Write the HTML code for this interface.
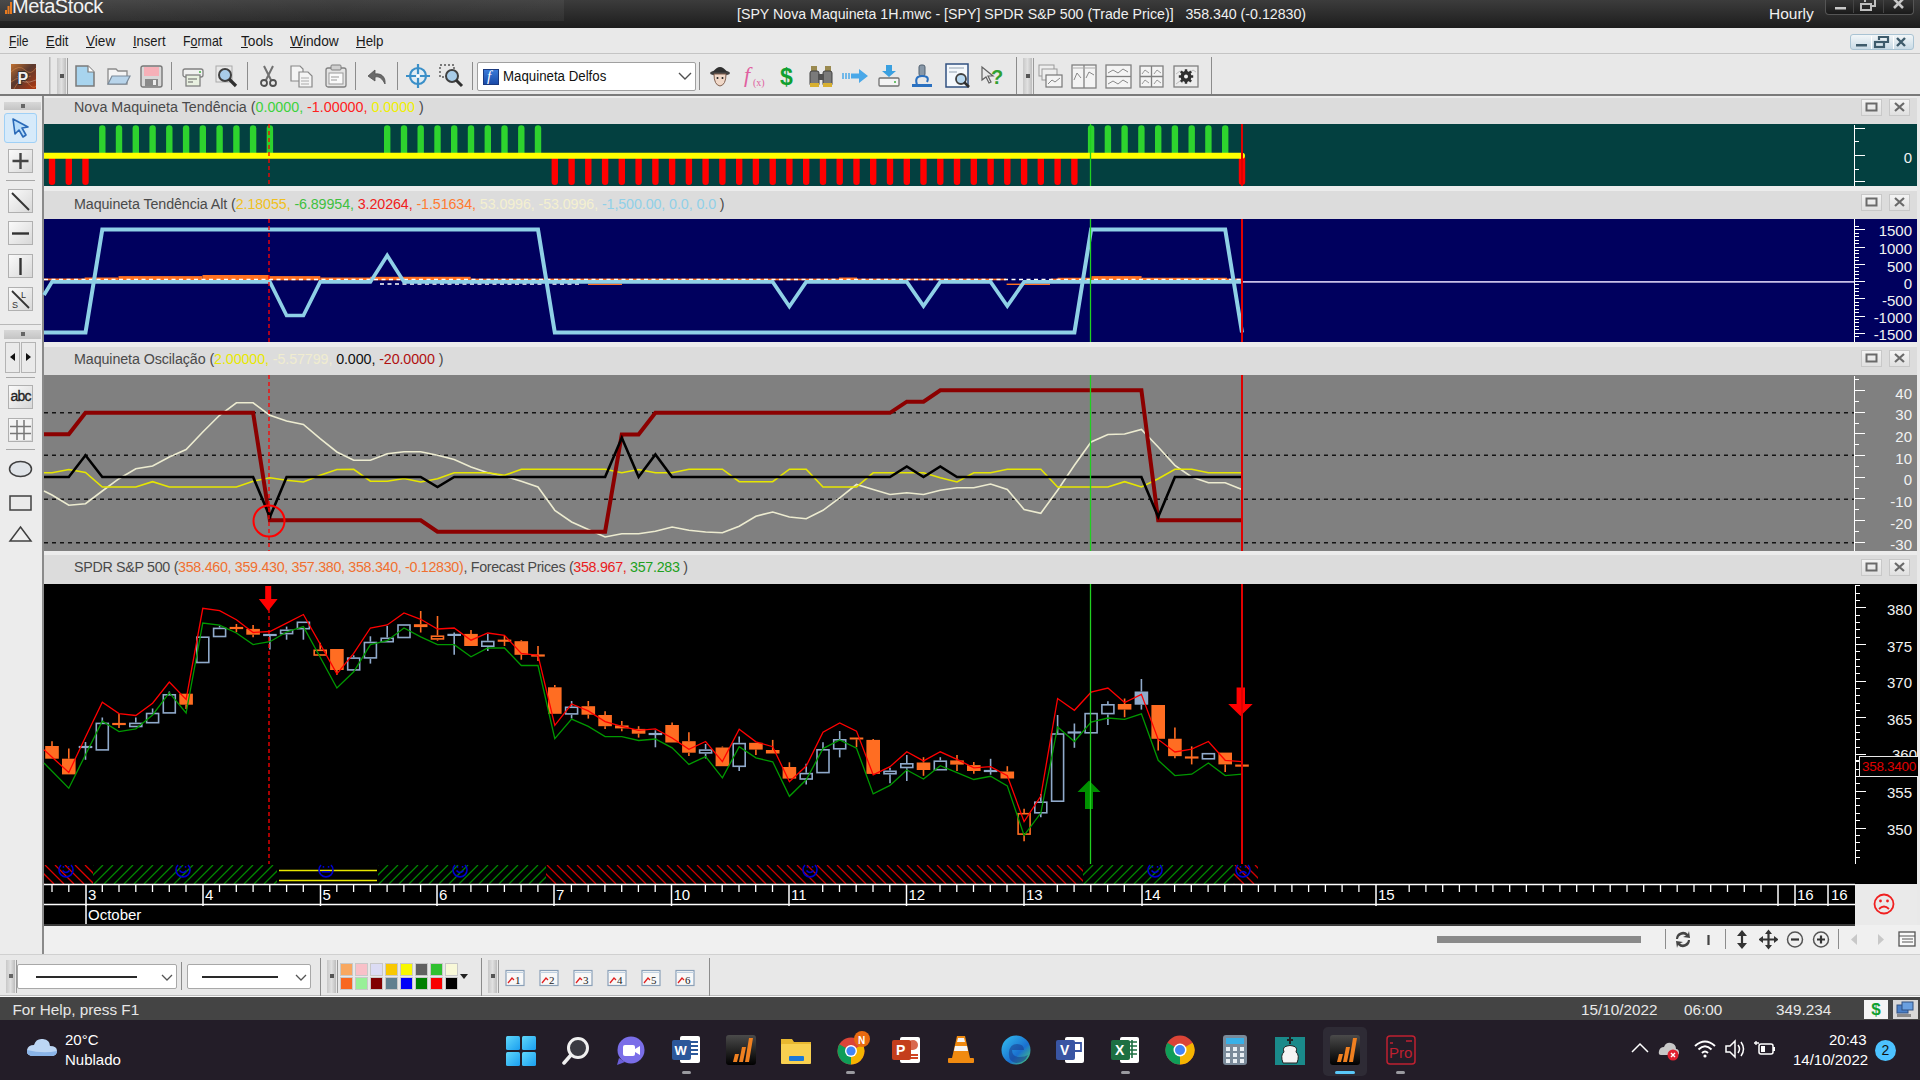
<!DOCTYPE html>
<html><head><meta charset="utf-8">
<style>
*{margin:0;padding:0;box-sizing:border-box}
html,body{width:1920px;height:1080px;overflow:hidden;background:#e9e9e9;font-family:"Liberation Sans",sans-serif}
.a{position:absolute}
.charts{position:absolute;left:0;top:0;z-index:2}
.top{z-index:3}
#title{left:0;top:0;width:1920px;height:28px;background:linear-gradient(#3c3c3c,#1d1d1d)}
#menu{left:0;top:28px;width:1920px;height:26px;background:#e9e9e9;border-bottom:1px solid #c4c4c4}
#menu span{position:absolute;top:4px;font-size:15px;color:#1a1a1a;transform-origin:0 0}
#tb{left:0;top:55px;width:1920px;height:41px;background:#e8e8e8;border-bottom:2px solid #7a7a7a}
#lt{left:0;top:96px;width:44px;height:858px;background:#ececec;border-right:2px solid #8a8a8a}
.hdr{left:44px;width:1873px;height:29px;background:#dcdcdc;border-top:4px solid #ececec}
.ht{left:74px;font-size:15.2px;color:#4a4a4a;white-space:pre;transform:scaleX(0.94);transform-origin:0 0;z-index:1}
.hb{position:absolute;width:21px;height:17px;border:1px solid #c8c8c8;background:linear-gradient(#f4f4f4,#e0e0e0)}
.xl{position:absolute;top:885.5px;font-size:15px;color:#fff;z-index:3}
.yl{position:absolute;font-size:15px;color:#f2f2f2;text-align:right;width:57px;left:1855px;z-index:3}
#status{left:0;top:996px;width:1920px;height:24px;background:#444444;color:#e6e6e6;font-size:15.3px;border-top:1px solid #fafafa}
#task{left:0;top:1020px;width:1920px;height:60px;background:#231d28}
</style></head><body>
<div class="a" id="title">
 <div class="a" style="left:0;top:0;width:564px;height:21px;background:linear-gradient(100deg,rgba(255,255,255,0.07),rgba(255,255,255,0.03) 60%,rgba(255,255,255,0.05))"></div>
 <div class="a" style="left:12px;top:-5px;font-size:20px;color:#f2f2f2;letter-spacing:-0.4px">MetaStock</div>
 <svg class="a" style="left:5px;top:2px" width="7" height="12"><path d="M0,12 V8 H2 V12 Z M2.5,12 V4 H4.5 V12 Z M5,12 V0 H7 V12 Z" fill="#e87a20"/></svg>
 <div class="a" style="left:737px;top:5.5px;font-size:14.2px;color:#f0f0f0;white-space:pre">[SPY Nova Maquineta 1H.mwc - [SPY] SPDR S&amp;P 500 (Trade Price)]   358.340 (-0.12830)</div>
 <div class="a" style="left:1769px;top:5px;font-size:15.5px;color:#f0f0f0">Hourly</div>
</div>
<div class="a" id="menu">
 <span style="left:9.25px;transform:scaleX(0.806)"><u>F</u>ile</span><span style="left:46.25px;transform:scaleX(0.869)"><u>E</u>dit</span><span style="left:85.75px;transform:scaleX(0.906)"><u>V</u>iew</span><span style="left:132.5px;transform:scaleX(0.867)"><u>I</u>nsert</span><span style="left:183.25px;transform:scaleX(0.826)">F<u>o</u>rmat</span><span style="left:240.5px;transform:scaleX(0.914)"><u>T</u>ools</span><span style="left:290px;transform:scaleX(0.913)"><u>W</u>indow</span><span style="left:356.25px;transform:scaleX(0.890)"><u>H</u>elp</span>
</div>
<div class="a" id="tb"></div>
<div class="a" id="lt"></div>

<!-- panels -->
<div class="a" style="left:44px;top:96px;width:1873px;height:2px;background:#ececec"></div>
<div class="a" style="left:44px;top:98px;width:1873px;height:26px;background:#dcdcdc"></div>
<div class="a ht" style="top:98px">Nova Maquineta Tendência (<span style="color:#3bd23b">0.0000, </span><span style="color:#ff2020">-1.00000, </span><span style="color:#f0f000">0.0000 </span>)</div>
<div class="a" style="left:44px;top:124px;width:1873px;height:62px;background:#034040"></div>
<div class="a" style="left:44px;top:186px;width:1873px;height:5px;background:#ececec"></div>
<div class="a" style="left:44px;top:191px;width:1873px;height:28px;background:#dcdcdc"></div>
<div class="a ht" style="top:194.5px;letter-spacing:-0.1px">Maquineta Tendência Alt (<span style="color:#f0c020">2.18055, </span><span style="color:#40c040">-6.89954, </span><span style="color:#f02020">3.20264, </span><span style="color:#ff7a30">-1.51634, </span><span style="color:#f4f0d0">53.0996, </span><span style="color:#f4f0d0">-53.0996, </span><span style="color:#90d0e8">-1,500.00, 0.0, 0.0</span> )</div>
<div class="a" style="left:44px;top:219px;width:1873px;height:123px;background:#00005e"></div>
<div class="a" style="left:44px;top:342px;width:1873px;height:5px;background:#ececec"></div>
<div class="a" style="left:44px;top:347px;width:1873px;height:28px;background:#dcdcdc"></div>
<div class="a ht" style="top:350px;letter-spacing:-0.1px">Maquineta Oscilação (<span style="color:#e8e800">2.00000, </span><span style="color:#f0ecd0">-5.57799, </span><span style="color:#101010">0.000, </span><span style="color:#b01010">-20.0000 </span>)</div>
<div class="a" style="left:44px;top:375px;width:1873px;height:176px;background:#808080"></div>
<div class="a" style="left:44px;top:551px;width:1873px;height:4px;background:#ececec"></div>
<div class="a" style="left:44px;top:555px;width:1873px;height:29px;background:#dcdcdc"></div>
<div class="a ht" style="top:558px;letter-spacing:-0.33px">SPDR S&amp;P 500 (<span style="color:#f07030">358.460, 359.430, 357.380, 358.340, -0.12830)</span>, Forecast Prices (<span style="color:#e82020">358.967, </span><span style="color:#20a020">357.283 </span>)</div>
<div class="a" style="left:44px;top:584px;width:1873px;height:341px;background:#000"></div>
<div class="a" id="status"><div class="a" style="left:12.5px;top:4px">For Help, press F1</div></div>
<div class="a" id="task"></div>
<svg class="charts" width="1920" height="1080"><line x1="52.0" y1="158" x2="52.0" y2="181.8" stroke="#ff0000" stroke-width="6.4" stroke-linecap="round"/>
<line x1="68.8" y1="158" x2="68.8" y2="181.8" stroke="#ff0000" stroke-width="6.4" stroke-linecap="round"/>
<line x1="85.5" y1="158" x2="85.5" y2="181.8" stroke="#ff0000" stroke-width="6.4" stroke-linecap="round"/>
<line x1="102.3" y1="128.5" x2="102.3" y2="153" stroke="#2ed32e" stroke-width="6.4" stroke-linecap="round"/>
<line x1="119.0" y1="128.5" x2="119.0" y2="153" stroke="#2ed32e" stroke-width="6.4" stroke-linecap="round"/>
<line x1="135.8" y1="128.5" x2="135.8" y2="153" stroke="#2ed32e" stroke-width="6.4" stroke-linecap="round"/>
<line x1="152.6" y1="128.5" x2="152.6" y2="153" stroke="#2ed32e" stroke-width="6.4" stroke-linecap="round"/>
<line x1="169.3" y1="128.5" x2="169.3" y2="153" stroke="#2ed32e" stroke-width="6.4" stroke-linecap="round"/>
<line x1="186.1" y1="128.5" x2="186.1" y2="153" stroke="#2ed32e" stroke-width="6.4" stroke-linecap="round"/>
<line x1="202.8" y1="128.5" x2="202.8" y2="153" stroke="#2ed32e" stroke-width="6.4" stroke-linecap="round"/>
<line x1="219.6" y1="128.5" x2="219.6" y2="153" stroke="#2ed32e" stroke-width="6.4" stroke-linecap="round"/>
<line x1="236.4" y1="128.5" x2="236.4" y2="153" stroke="#2ed32e" stroke-width="6.4" stroke-linecap="round"/>
<line x1="253.1" y1="128.5" x2="253.1" y2="153" stroke="#2ed32e" stroke-width="6.4" stroke-linecap="round"/>
<line x1="269.9" y1="128.5" x2="269.9" y2="153" stroke="#2ed32e" stroke-width="6.4" stroke-linecap="round"/>
<line x1="387.2" y1="128.5" x2="387.2" y2="153" stroke="#2ed32e" stroke-width="6.4" stroke-linecap="round"/>
<line x1="404.0" y1="128.5" x2="404.0" y2="153" stroke="#2ed32e" stroke-width="6.4" stroke-linecap="round"/>
<line x1="420.7" y1="128.5" x2="420.7" y2="153" stroke="#2ed32e" stroke-width="6.4" stroke-linecap="round"/>
<line x1="437.5" y1="128.5" x2="437.5" y2="153" stroke="#2ed32e" stroke-width="6.4" stroke-linecap="round"/>
<line x1="454.2" y1="128.5" x2="454.2" y2="153" stroke="#2ed32e" stroke-width="6.4" stroke-linecap="round"/>
<line x1="471.0" y1="128.5" x2="471.0" y2="153" stroke="#2ed32e" stroke-width="6.4" stroke-linecap="round"/>
<line x1="487.8" y1="128.5" x2="487.8" y2="153" stroke="#2ed32e" stroke-width="6.4" stroke-linecap="round"/>
<line x1="504.5" y1="128.5" x2="504.5" y2="153" stroke="#2ed32e" stroke-width="6.4" stroke-linecap="round"/>
<line x1="521.3" y1="128.5" x2="521.3" y2="153" stroke="#2ed32e" stroke-width="6.4" stroke-linecap="round"/>
<line x1="538.0" y1="128.5" x2="538.0" y2="153" stroke="#2ed32e" stroke-width="6.4" stroke-linecap="round"/>
<line x1="554.8" y1="158" x2="554.8" y2="181.8" stroke="#ff0000" stroke-width="6.4" stroke-linecap="round"/>
<line x1="571.6" y1="158" x2="571.6" y2="181.8" stroke="#ff0000" stroke-width="6.4" stroke-linecap="round"/>
<line x1="588.3" y1="158" x2="588.3" y2="181.8" stroke="#ff0000" stroke-width="6.4" stroke-linecap="round"/>
<line x1="605.1" y1="158" x2="605.1" y2="181.8" stroke="#ff0000" stroke-width="6.4" stroke-linecap="round"/>
<line x1="621.8" y1="158" x2="621.8" y2="181.8" stroke="#ff0000" stroke-width="6.4" stroke-linecap="round"/>
<line x1="638.6" y1="158" x2="638.6" y2="181.8" stroke="#ff0000" stroke-width="6.4" stroke-linecap="round"/>
<line x1="655.4" y1="158" x2="655.4" y2="181.8" stroke="#ff0000" stroke-width="6.4" stroke-linecap="round"/>
<line x1="672.1" y1="158" x2="672.1" y2="181.8" stroke="#ff0000" stroke-width="6.4" stroke-linecap="round"/>
<line x1="688.9" y1="158" x2="688.9" y2="181.8" stroke="#ff0000" stroke-width="6.4" stroke-linecap="round"/>
<line x1="705.6" y1="158" x2="705.6" y2="181.8" stroke="#ff0000" stroke-width="6.4" stroke-linecap="round"/>
<line x1="722.4" y1="158" x2="722.4" y2="181.8" stroke="#ff0000" stroke-width="6.4" stroke-linecap="round"/>
<line x1="739.2" y1="158" x2="739.2" y2="181.8" stroke="#ff0000" stroke-width="6.4" stroke-linecap="round"/>
<line x1="755.9" y1="158" x2="755.9" y2="181.8" stroke="#ff0000" stroke-width="6.4" stroke-linecap="round"/>
<line x1="772.7" y1="158" x2="772.7" y2="181.8" stroke="#ff0000" stroke-width="6.4" stroke-linecap="round"/>
<line x1="789.4" y1="158" x2="789.4" y2="181.8" stroke="#ff0000" stroke-width="6.4" stroke-linecap="round"/>
<line x1="806.2" y1="158" x2="806.2" y2="181.8" stroke="#ff0000" stroke-width="6.4" stroke-linecap="round"/>
<line x1="823.0" y1="158" x2="823.0" y2="181.8" stroke="#ff0000" stroke-width="6.4" stroke-linecap="round"/>
<line x1="839.7" y1="158" x2="839.7" y2="181.8" stroke="#ff0000" stroke-width="6.4" stroke-linecap="round"/>
<line x1="856.5" y1="158" x2="856.5" y2="181.8" stroke="#ff0000" stroke-width="6.4" stroke-linecap="round"/>
<line x1="873.2" y1="158" x2="873.2" y2="181.8" stroke="#ff0000" stroke-width="6.4" stroke-linecap="round"/>
<line x1="890.0" y1="158" x2="890.0" y2="181.8" stroke="#ff0000" stroke-width="6.4" stroke-linecap="round"/>
<line x1="906.8" y1="158" x2="906.8" y2="181.8" stroke="#ff0000" stroke-width="6.4" stroke-linecap="round"/>
<line x1="923.5" y1="158" x2="923.5" y2="181.8" stroke="#ff0000" stroke-width="6.4" stroke-linecap="round"/>
<line x1="940.3" y1="158" x2="940.3" y2="181.8" stroke="#ff0000" stroke-width="6.4" stroke-linecap="round"/>
<line x1="957.0" y1="158" x2="957.0" y2="181.8" stroke="#ff0000" stroke-width="6.4" stroke-linecap="round"/>
<line x1="973.8" y1="158" x2="973.8" y2="181.8" stroke="#ff0000" stroke-width="6.4" stroke-linecap="round"/>
<line x1="990.6" y1="158" x2="990.6" y2="181.8" stroke="#ff0000" stroke-width="6.4" stroke-linecap="round"/>
<line x1="1007.3" y1="158" x2="1007.3" y2="181.8" stroke="#ff0000" stroke-width="6.4" stroke-linecap="round"/>
<line x1="1024.1" y1="158" x2="1024.1" y2="181.8" stroke="#ff0000" stroke-width="6.4" stroke-linecap="round"/>
<line x1="1040.8" y1="158" x2="1040.8" y2="181.8" stroke="#ff0000" stroke-width="6.4" stroke-linecap="round"/>
<line x1="1057.6" y1="158" x2="1057.6" y2="181.8" stroke="#ff0000" stroke-width="6.4" stroke-linecap="round"/>
<line x1="1074.4" y1="158" x2="1074.4" y2="181.8" stroke="#ff0000" stroke-width="6.4" stroke-linecap="round"/>
<line x1="1091.1" y1="128.5" x2="1091.1" y2="153" stroke="#2ed32e" stroke-width="6.4" stroke-linecap="round"/>
<line x1="1107.9" y1="128.5" x2="1107.9" y2="153" stroke="#2ed32e" stroke-width="6.4" stroke-linecap="round"/>
<line x1="1124.6" y1="128.5" x2="1124.6" y2="153" stroke="#2ed32e" stroke-width="6.4" stroke-linecap="round"/>
<line x1="1141.4" y1="128.5" x2="1141.4" y2="153" stroke="#2ed32e" stroke-width="6.4" stroke-linecap="round"/>
<line x1="1158.2" y1="128.5" x2="1158.2" y2="153" stroke="#2ed32e" stroke-width="6.4" stroke-linecap="round"/>
<line x1="1174.9" y1="128.5" x2="1174.9" y2="153" stroke="#2ed32e" stroke-width="6.4" stroke-linecap="round"/>
<line x1="1191.7" y1="128.5" x2="1191.7" y2="153" stroke="#2ed32e" stroke-width="6.4" stroke-linecap="round"/>
<line x1="1208.4" y1="128.5" x2="1208.4" y2="153" stroke="#2ed32e" stroke-width="6.4" stroke-linecap="round"/>
<line x1="1225.2" y1="128.5" x2="1225.2" y2="153" stroke="#2ed32e" stroke-width="6.4" stroke-linecap="round"/>
<line x1="1242.0" y1="158" x2="1242.0" y2="181.8" stroke="#ff0000" stroke-width="6.4" stroke-linecap="round"/>
<line x1="44" y1="155.8" x2="1242.0" y2="155.8" stroke="#ffff00" stroke-width="6"/><circle cx="1242.0" cy="155.8" r="3" fill="#ffff00"/>
<line x1="1854.5" y1="125" x2="1854.5" y2="186" stroke="#fff" stroke-width="1"/>
<line x1="1855" y1="128.5" x2="1865" y2="128.5" stroke="#fff" stroke-width="1"/>
<line x1="1855" y1="141.5" x2="1859" y2="141.5" stroke="#fff" stroke-width="1"/>
<line x1="1855" y1="155.5" x2="1865" y2="155.5" stroke="#fff" stroke-width="1"/>
<line x1="1855" y1="169.5" x2="1859" y2="169.5" stroke="#fff" stroke-width="1"/>
<line x1="1855" y1="181.5" x2="1865" y2="181.5" stroke="#fff" stroke-width="1"/>
<line x1="1242" y1="281.8" x2="1855" y2="281.8" stroke="#c8c0e8" stroke-width="1.8"/>
<rect x="44" y="278.5" width="40.6" height="1.8" fill="#ff7020"/>
<rect x="84.6" y="277.5" width="33.9" height="2.8" fill="#ff7020"/>
<rect x="118.5" y="276.1" width="84.0" height="4.2" fill="#ff7020"/>
<rect x="202.5" y="275" width="66.5" height="5.3" fill="#ff7020"/>
<rect x="269" y="276.1" width="51.3" height="4.2" fill="#ff7020"/>
<rect x="320.3" y="277.5" width="49.7" height="2.8" fill="#ff7020"/>
<rect x="370" y="276.8" width="100.7" height="3.5" fill="#ff7020"/>
<rect x="470.7" y="278.6" width="368.3" height="1.7" fill="#ff7020"/>
<rect x="839" y="277.5" width="18.0" height="2.8" fill="#ff7020"/>
<rect x="857" y="278.6" width="149.0" height="1.7" fill="#ff7020"/>
<rect x="1051" y="278.6" width="6.6" height="1.7" fill="#ff7020"/>
<rect x="1057.6" y="277.75" width="33.9" height="2.6" fill="#ff7020"/>
<rect x="1091.5" y="276.1" width="50.1" height="4.2" fill="#ff7020"/>
<rect x="1141.6" y="277.75" width="85.4" height="2.6" fill="#ff7020"/>
<rect x="1227" y="278.6" width="15.0" height="1.7" fill="#ff7020"/>
<rect x="588" y="283.6" width="34.0" height="1.4" fill="#ff7020"/>
<rect x="1006.6" y="283.6" width="43.4" height="1.4" fill="#ff7020"/>
<line x1="44" y1="279.5" x2="1242" y2="279.5" stroke="#ffffff" stroke-width="1.4" stroke-dasharray="4 3.5"/>
<line x1="380" y1="284" x2="579" y2="284" stroke="#ffffff" stroke-width="1.4" stroke-dasharray="4 3.5"/>
<polyline points="44.0,295.0 52.0,281.9 269.9,281.9 286.6,315.5 303.4,315.5 320.2,281.9 370.4,281.9 387.2,255.5 404.0,281.9 772.7,281.9 789.4,306.5 806.2,281.9 906.8,281.9 923.5,306.0 940.3,281.9 990.6,281.9 1007.3,306.0 1024.1,281.9 1242.0,281.9" fill="none" stroke="#8fd0e6" stroke-width="3.7" stroke-linejoin="miter" />
<polyline points="44.0,332.5 85.5,332.5 102.3,229.5 538.0,229.5 554.8,332.5 1074.4,332.5 1091.1,229.5 1225.2,229.5 1242.0,332.5" fill="none" stroke="#8fd0e6" stroke-width="4" stroke-linejoin="miter" />
<line x1="1854.5" y1="219" x2="1854.5" y2="342" stroke="#fff" stroke-width="1"/>
<line x1="1855" y1="336.5" x2="1859" y2="336.5" stroke="#fff" stroke-width="1"/>
<line x1="1855" y1="333.5" x2="1865" y2="333.5" stroke="#fff" stroke-width="1"/>
<line x1="1855" y1="329.5" x2="1859" y2="329.5" stroke="#fff" stroke-width="1"/>
<line x1="1855" y1="326.5" x2="1859" y2="326.5" stroke="#fff" stroke-width="1"/>
<line x1="1855" y1="322.5" x2="1859" y2="322.5" stroke="#fff" stroke-width="1"/>
<line x1="1855" y1="319.5" x2="1859" y2="319.5" stroke="#fff" stroke-width="1"/>
<line x1="1855" y1="316.5" x2="1865" y2="316.5" stroke="#fff" stroke-width="1"/>
<line x1="1855" y1="312.5" x2="1859" y2="312.5" stroke="#fff" stroke-width="1"/>
<line x1="1855" y1="309.5" x2="1859" y2="309.5" stroke="#fff" stroke-width="1"/>
<line x1="1855" y1="305.5" x2="1859" y2="305.5" stroke="#fff" stroke-width="1"/>
<line x1="1855" y1="302.5" x2="1859" y2="302.5" stroke="#fff" stroke-width="1"/>
<line x1="1855" y1="298.5" x2="1865" y2="298.5" stroke="#fff" stroke-width="1"/>
<line x1="1855" y1="295.5" x2="1859" y2="295.5" stroke="#fff" stroke-width="1"/>
<line x1="1855" y1="291.5" x2="1859" y2="291.5" stroke="#fff" stroke-width="1"/>
<line x1="1855" y1="288.5" x2="1859" y2="288.5" stroke="#fff" stroke-width="1"/>
<line x1="1855" y1="284.5" x2="1859" y2="284.5" stroke="#fff" stroke-width="1"/>
<line x1="1855" y1="281.5" x2="1865" y2="281.5" stroke="#fff" stroke-width="1"/>
<line x1="1855" y1="278.5" x2="1859" y2="278.5" stroke="#fff" stroke-width="1"/>
<line x1="1855" y1="274.5" x2="1859" y2="274.5" stroke="#fff" stroke-width="1"/>
<line x1="1855" y1="271.5" x2="1859" y2="271.5" stroke="#fff" stroke-width="1"/>
<line x1="1855" y1="267.5" x2="1859" y2="267.5" stroke="#fff" stroke-width="1"/>
<line x1="1855" y1="264.5" x2="1865" y2="264.5" stroke="#fff" stroke-width="1"/>
<line x1="1855" y1="260.5" x2="1859" y2="260.5" stroke="#fff" stroke-width="1"/>
<line x1="1855" y1="257.5" x2="1859" y2="257.5" stroke="#fff" stroke-width="1"/>
<line x1="1855" y1="253.5" x2="1859" y2="253.5" stroke="#fff" stroke-width="1"/>
<line x1="1855" y1="250.5" x2="1859" y2="250.5" stroke="#fff" stroke-width="1"/>
<line x1="1855" y1="247.5" x2="1865" y2="247.5" stroke="#fff" stroke-width="1"/>
<line x1="1855" y1="243.5" x2="1859" y2="243.5" stroke="#fff" stroke-width="1"/>
<line x1="1855" y1="240.5" x2="1859" y2="240.5" stroke="#fff" stroke-width="1"/>
<line x1="1855" y1="236.5" x2="1859" y2="236.5" stroke="#fff" stroke-width="1"/>
<line x1="1855" y1="233.5" x2="1859" y2="233.5" stroke="#fff" stroke-width="1"/>
<line x1="1855" y1="229.5" x2="1865" y2="229.5" stroke="#fff" stroke-width="1"/>
<line x1="1855" y1="226.5" x2="1859" y2="226.5" stroke="#fff" stroke-width="1"/>
<line x1="44" y1="412.8" x2="1854" y2="412.8" stroke="#000" stroke-width="1.5" stroke-dasharray="4 4" opacity="0.85"/>
<line x1="44" y1="455.3" x2="1854" y2="455.3" stroke="#000" stroke-width="1.5" stroke-dasharray="4 4" opacity="0.85"/>
<line x1="44" y1="499.2" x2="1854" y2="499.2" stroke="#000" stroke-width="1.5" stroke-dasharray="4 4" opacity="0.85"/>
<line x1="44" y1="542.8" x2="1854" y2="542.8" stroke="#000" stroke-width="1.5" stroke-dasharray="4 4" opacity="0.85"/>
<polyline points="44.0,491.0 52.0,495.0 68.8,505.3 85.5,503.7 102.3,491.0 119.0,478.7 135.8,468.7 152.6,466.0 169.3,457.0 186.1,449.5 202.8,432.0 219.6,415.3 236.4,402.8 253.1,402.8 269.9,415.3 286.6,421.0 303.4,424.5 320.2,438.7 336.9,452.0 353.7,460.3 370.4,460.3 387.2,453.7 404.0,451.7 420.7,451.7 437.5,455.3 454.2,459.5 471.0,467.0 487.8,472.8 504.5,476.2 521.3,481.2 538.0,487.0 554.8,510.3 571.6,522.0 588.3,529.5 605.1,537.0 621.8,533.7 638.6,533.7 655.4,531.2 672.1,527.0 688.9,530.3 705.6,532.0 722.4,532.8 739.2,526.2 755.9,516.2 772.7,512.0 789.4,517.0 806.2,518.7 823.0,510.3 839.7,497.8 856.5,484.5 873.2,489.5 890.0,494.5 906.8,492.8 923.5,494.5 940.3,490.3 957.0,487.8 973.8,487.8 990.6,484.0 1007.3,489.5 1024.1,509.5 1040.8,513.3 1057.6,490.3 1074.4,465.3 1091.1,442.0 1107.9,434.5 1124.6,434.0 1141.4,429.5 1158.2,447.0 1174.9,465.3 1191.7,477.0 1208.4,482.8 1225.2,482.8 1242.0,489.5" fill="none" stroke="#ecebd0" stroke-width="1.6" stroke-linejoin="miter" />
<polyline points="44.0,472.8 52.0,472.8 68.8,469.5 85.5,472.5 102.3,487.0 135.8,487.0 152.6,481.7 169.3,487.0 236.4,487.0 253.1,481.2 269.9,477.8 286.6,480.3 303.4,482.0 320.2,475.3 336.9,469.5 353.7,469.3 370.4,481.2 387.2,481.2 404.0,478.5 420.7,482.0 437.5,478.7 454.2,472.8 487.8,472.8 504.5,475.3 521.3,469.2 605.1,469.2 621.8,472.8 638.6,469.5 655.4,472.8 672.1,472.8 688.9,469.2 722.4,469.2 739.2,481.7 772.7,481.7 789.4,469.2 806.2,469.2 823.0,487.0 856.5,487.0 873.2,472.8 923.5,472.8 940.3,477.8 957.0,482.0 973.8,472.8 990.6,472.8 1007.3,469.2 1040.8,469.2 1057.6,487.0 1107.9,487.0 1124.6,481.7 1141.4,487.0 1158.2,478.7 1174.9,469.2 1191.7,469.2 1208.4,472.8 1242.0,472.8" fill="none" stroke="#e6e600" stroke-width="1.6" stroke-linejoin="miter" />
<polyline points="44.0,434.2 68.8,434.2 85.5,412.8 253.1,412.8 269.9,520.3 420.7,520.3 437.5,531.7 605.1,531.7 621.8,434.5 638.6,434.5 655.4,412.8 890.0,412.8 906.8,401.7 923.5,401.7 940.3,390.3 1141.4,390.3 1158.2,520.3 1242.0,520.3" fill="none" stroke="#8b0000" stroke-width="4" stroke-linejoin="miter" />
<polyline points="44.0,477.0 68.8,477.0 85.5,455.3 102.3,477.0 253.1,477.0 269.9,517.0 286.6,477.0 420.7,477.0 437.5,487.0 454.2,477.0 605.1,477.0 621.8,437.8 638.6,477.0 655.4,454.5 672.1,477.0 890.0,477.0 906.8,466.5 923.5,477.0 940.3,466.5 957.0,477.0 1141.4,477.0 1158.2,517.0 1174.9,477.0 1242.0,477.0" fill="none" stroke="#000000" stroke-width="2.6" stroke-linejoin="miter" />
<circle cx="269" cy="521" r="15.5" fill="none" stroke="#ff0000" stroke-width="2"/>
<line x1="1854.5" y1="376" x2="1854.5" y2="551" stroke="#fff" stroke-width="1"/>
<line x1="1855" y1="542.5" x2="1865" y2="542.5" stroke="#fff" stroke-width="1"/>
<line x1="1855" y1="531.5" x2="1859" y2="531.5" stroke="#fff" stroke-width="1"/>
<line x1="1855" y1="520.5" x2="1865" y2="520.5" stroke="#fff" stroke-width="1"/>
<line x1="1855" y1="509.5" x2="1859" y2="509.5" stroke="#fff" stroke-width="1"/>
<line x1="1855" y1="498.5" x2="1865" y2="498.5" stroke="#fff" stroke-width="1"/>
<line x1="1855" y1="488.5" x2="1859" y2="488.5" stroke="#fff" stroke-width="1"/>
<line x1="1855" y1="477.5" x2="1865" y2="477.5" stroke="#fff" stroke-width="1"/>
<line x1="1855" y1="466.5" x2="1859" y2="466.5" stroke="#fff" stroke-width="1"/>
<line x1="1855" y1="455.5" x2="1865" y2="455.5" stroke="#fff" stroke-width="1"/>
<line x1="1855" y1="444.5" x2="1859" y2="444.5" stroke="#fff" stroke-width="1"/>
<line x1="1855" y1="433.5" x2="1865" y2="433.5" stroke="#fff" stroke-width="1"/>
<line x1="1855" y1="423.5" x2="1859" y2="423.5" stroke="#fff" stroke-width="1"/>
<line x1="1855" y1="412.5" x2="1865" y2="412.5" stroke="#fff" stroke-width="1"/>
<line x1="1855" y1="401.5" x2="1859" y2="401.5" stroke="#fff" stroke-width="1"/>
<line x1="1855" y1="390.5" x2="1865" y2="390.5" stroke="#fff" stroke-width="1"/>
<line x1="1855" y1="379.5" x2="1859" y2="379.5" stroke="#fff" stroke-width="1"/>
<line x1="52.0" y1="741.2" x2="52.0" y2="746" stroke="#ff6d22" stroke-width="1.6"/>
<rect x="45.2" y="746" width="13.6" height="12.7" fill="#ff6d22"/>
<line x1="68.8" y1="748.4" x2="68.8" y2="758.7" stroke="#ff6d22" stroke-width="1.6"/>
<rect x="62.0" y="758.7" width="13.6" height="15.7" fill="#ff6d22"/>
<line x1="85.5" y1="742" x2="85.5" y2="747" stroke="#90aacb" stroke-width="1.6"/>
<line x1="85.5" y1="747" x2="85.5" y2="759.8" stroke="#90aacb" stroke-width="1.6"/>
<line x1="78.7" y1="747" x2="92.3" y2="747" stroke="#90aacb" stroke-width="2.2"/>
<line x1="102.3" y1="717.5" x2="102.3" y2="722.6" stroke="#90aacb" stroke-width="1.6"/>
<rect x="96.3" y="723.4" width="12.0" height="26.5" fill="none" stroke="#90aacb" stroke-width="1.6"/>
<line x1="119.0" y1="714" x2="119.0" y2="724" stroke="#ff6d22" stroke-width="1.6"/>
<line x1="119.0" y1="724" x2="119.0" y2="728" stroke="#ff6d22" stroke-width="1.6"/>
<line x1="112.2" y1="724" x2="125.8" y2="724" stroke="#ff6d22" stroke-width="2.2"/>
<line x1="135.8" y1="717.5" x2="135.8" y2="722.6" stroke="#90aacb" stroke-width="1.6"/>
<rect x="129.8" y="723.4" width="12.0" height="3.1" fill="none" stroke="#90aacb" stroke-width="1.6"/>
<line x1="152.6" y1="708.5" x2="152.6" y2="712.7" stroke="#90aacb" stroke-width="1.6"/>
<rect x="146.6" y="713.5" width="12.0" height="9.2" fill="none" stroke="#90aacb" stroke-width="1.6"/>
<line x1="169.3" y1="691.5" x2="169.3" y2="694" stroke="#90aacb" stroke-width="1.6"/>
<rect x="163.3" y="694.8" width="12.0" height="18.1" fill="none" stroke="#90aacb" stroke-width="1.6"/>
<line x1="186.1" y1="704.7" x2="186.1" y2="709" stroke="#ff6d22" stroke-width="1.6"/>
<rect x="179.3" y="693.7" width="13.6" height="11.0" fill="#ff6d22"/>
<rect x="196.8" y="637.1999999999999" width="12.0" height="25.3" fill="none" stroke="#90aacb" stroke-width="1.6"/>
<line x1="219.6" y1="626" x2="219.6" y2="627.6" stroke="#90aacb" stroke-width="1.6"/>
<rect x="213.6" y="628.4" width="12.0" height="8.1" fill="none" stroke="#90aacb" stroke-width="1.6"/>
<line x1="236.4" y1="624" x2="236.4" y2="628" stroke="#ff6d22" stroke-width="1.6"/>
<line x1="236.4" y1="628" x2="236.4" y2="632.2" stroke="#ff6d22" stroke-width="1.6"/>
<line x1="229.6" y1="628" x2="243.2" y2="628" stroke="#ff6d22" stroke-width="2.2"/>
<line x1="253.1" y1="625" x2="253.1" y2="628.9" stroke="#ff6d22" stroke-width="1.6"/>
<line x1="253.1" y1="634.7" x2="253.1" y2="637.3" stroke="#ff6d22" stroke-width="1.6"/>
<rect x="246.3" y="628.9" width="13.6" height="5.8" fill="#ff6d22"/>
<line x1="269.9" y1="635" x2="269.9" y2="649.5" stroke="#90aacb" stroke-width="1.6"/>
<line x1="263.1" y1="635" x2="276.7" y2="635" stroke="#90aacb" stroke-width="2.2"/>
<line x1="286.6" y1="626.6" x2="286.6" y2="629.5" stroke="#90aacb" stroke-width="1.6"/>
<line x1="286.6" y1="634.4" x2="286.6" y2="639.7" stroke="#90aacb" stroke-width="1.6"/>
<rect x="280.6" y="630.3" width="12.0" height="3.3" fill="none" stroke="#90aacb" stroke-width="1.6"/>
<line x1="303.4" y1="629.5" x2="303.4" y2="639.7" stroke="#90aacb" stroke-width="1.6"/>
<rect x="297.4" y="622.3" width="12.0" height="6.4" fill="none" stroke="#90aacb" stroke-width="1.6"/>
<line x1="320.2" y1="642.7" x2="320.2" y2="649.5" stroke="#ff6d22" stroke-width="1.6"/>
<rect x="314.2" y="650.3" width="12.0" height="4.7" fill="none" stroke="#ff6d22" stroke-width="1.6"/>
<line x1="336.9" y1="670" x2="336.9" y2="674.8" stroke="#ff6d22" stroke-width="1.6"/>
<rect x="330.1" y="649" width="13.6" height="21.0" fill="#ff6d22"/>
<line x1="353.7" y1="655.3" x2="353.7" y2="657.3" stroke="#90aacb" stroke-width="1.6"/>
<rect x="347.7" y="658.0999999999999" width="12.0" height="11.8" fill="none" stroke="#90aacb" stroke-width="1.6"/>
<line x1="370.4" y1="636.3" x2="370.4" y2="641.7" stroke="#90aacb" stroke-width="1.6"/>
<line x1="370.4" y1="658.7" x2="370.4" y2="663.6" stroke="#90aacb" stroke-width="1.6"/>
<rect x="364.4" y="642.5" width="12.0" height="15.4" fill="none" stroke="#90aacb" stroke-width="1.6"/>
<line x1="387.2" y1="626" x2="387.2" y2="637.5" stroke="#90aacb" stroke-width="1.6"/>
<rect x="381.2" y="638.3" width="12.0" height="3.4" fill="none" stroke="#90aacb" stroke-width="1.6"/>
<rect x="398.0" y="625.0" width="12.0" height="12.5" fill="none" stroke="#90aacb" stroke-width="1.6"/>
<line x1="420.7" y1="611" x2="420.7" y2="624.2" stroke="#ff6d22" stroke-width="1.6"/>
<line x1="420.7" y1="627.1" x2="420.7" y2="632.5" stroke="#ff6d22" stroke-width="1.6"/>
<rect x="413.9" y="624.2" width="13.6" height="2.9" fill="#ff6d22"/>
<line x1="437.5" y1="616" x2="437.5" y2="635.4" stroke="#ff6d22" stroke-width="1.6"/>
<line x1="437.5" y1="639.7" x2="437.5" y2="640.7" stroke="#ff6d22" stroke-width="1.6"/>
<rect x="431.5" y="636.1999999999999" width="12.0" height="2.7" fill="none" stroke="#ff6d22" stroke-width="1.6"/>
<line x1="454.2" y1="632.5" x2="454.2" y2="634.9" stroke="#90aacb" stroke-width="1.6"/>
<line x1="454.2" y1="634.9" x2="454.2" y2="654.8" stroke="#90aacb" stroke-width="1.6"/>
<line x1="447.4" y1="634.9" x2="461.0" y2="634.9" stroke="#90aacb" stroke-width="2.2"/>
<line x1="471.0" y1="630" x2="471.0" y2="633.9" stroke="#ff6d22" stroke-width="1.6"/>
<rect x="464.2" y="633.9" width="13.6" height="12.1" fill="#ff6d22"/>
<line x1="487.8" y1="633.9" x2="487.8" y2="640.7" stroke="#90aacb" stroke-width="1.6"/>
<line x1="487.8" y1="647" x2="487.8" y2="651" stroke="#90aacb" stroke-width="1.6"/>
<rect x="481.8" y="641.5" width="12.0" height="4.7" fill="none" stroke="#90aacb" stroke-width="1.6"/>
<line x1="504.5" y1="635.9" x2="504.5" y2="640.7" stroke="#ff6d22" stroke-width="1.6"/>
<line x1="504.5" y1="640.7" x2="504.5" y2="646" stroke="#ff6d22" stroke-width="1.6"/>
<line x1="497.7" y1="640.7" x2="511.3" y2="640.7" stroke="#ff6d22" stroke-width="2.2"/>
<line x1="521.3" y1="640.2" x2="521.3" y2="641.2" stroke="#ff6d22" stroke-width="1.6"/>
<line x1="521.3" y1="654.8" x2="521.3" y2="659.7" stroke="#ff6d22" stroke-width="1.6"/>
<rect x="514.5" y="641.2" width="13.6" height="13.6" fill="#ff6d22"/>
<line x1="538.0" y1="646" x2="538.0" y2="655.5" stroke="#ff6d22" stroke-width="1.6"/>
<line x1="538.0" y1="655.5" x2="538.0" y2="661" stroke="#ff6d22" stroke-width="1.6"/>
<line x1="531.2" y1="655.5" x2="544.8" y2="655.5" stroke="#ff6d22" stroke-width="2.2"/>
<line x1="554.8" y1="685" x2="554.8" y2="687.3" stroke="#ff6d22" stroke-width="1.6"/>
<rect x="548.0" y="687.3" width="13.6" height="26.5" fill="#ff6d22"/>
<line x1="571.6" y1="701" x2="571.6" y2="706.5" stroke="#90aacb" stroke-width="1.6"/>
<line x1="571.6" y1="714.7" x2="571.6" y2="718.6" stroke="#90aacb" stroke-width="1.6"/>
<rect x="565.6" y="707.3" width="12.0" height="6.6" fill="none" stroke="#90aacb" stroke-width="1.6"/>
<line x1="588.3" y1="701" x2="588.3" y2="706.2" stroke="#ff6d22" stroke-width="1.6"/>
<line x1="588.3" y1="714.7" x2="588.3" y2="718.6" stroke="#ff6d22" stroke-width="1.6"/>
<rect x="581.5" y="706.2" width="13.6" height="8.5" fill="#ff6d22"/>
<line x1="605.1" y1="711.3" x2="605.1" y2="715" stroke="#ff6d22" stroke-width="1.6"/>
<line x1="605.1" y1="726.2" x2="605.1" y2="728.9" stroke="#ff6d22" stroke-width="1.6"/>
<rect x="598.3" y="715" width="13.6" height="11.2" fill="#ff6d22"/>
<line x1="621.8" y1="721" x2="621.8" y2="725.4" stroke="#ff6d22" stroke-width="1.6"/>
<line x1="621.8" y1="728.4" x2="621.8" y2="731.3" stroke="#ff6d22" stroke-width="1.6"/>
<rect x="615.0" y="725.4" width="13.6" height="3.0" fill="#ff6d22"/>
<line x1="638.6" y1="726.2" x2="638.6" y2="728.9" stroke="#ff6d22" stroke-width="1.6"/>
<line x1="638.6" y1="733.7" x2="638.6" y2="737.6" stroke="#ff6d22" stroke-width="1.6"/>
<rect x="631.8" y="728.9" width="13.6" height="4.8" fill="#ff6d22"/>
<line x1="655.4" y1="730.3" x2="655.4" y2="734" stroke="#90aacb" stroke-width="1.6"/>
<line x1="655.4" y1="734" x2="655.4" y2="747.3" stroke="#90aacb" stroke-width="1.6"/>
<line x1="648.6" y1="734" x2="662.2" y2="734" stroke="#90aacb" stroke-width="2.2"/>
<line x1="672.1" y1="722.5" x2="672.1" y2="725" stroke="#ff6d22" stroke-width="1.6"/>
<rect x="665.3" y="725" width="13.6" height="17.5" fill="#ff6d22"/>
<line x1="688.9" y1="732.3" x2="688.9" y2="741.2" stroke="#ff6d22" stroke-width="1.6"/>
<line x1="688.9" y1="752.7" x2="688.9" y2="756" stroke="#ff6d22" stroke-width="1.6"/>
<rect x="682.1" y="741.2" width="13.6" height="11.5" fill="#ff6d22"/>
<line x1="705.6" y1="744" x2="705.6" y2="749.3" stroke="#90aacb" stroke-width="1.6"/>
<line x1="705.6" y1="753.7" x2="705.6" y2="758.5" stroke="#90aacb" stroke-width="1.6"/>
<rect x="699.6" y="750.0999999999999" width="12.0" height="2.8" fill="none" stroke="#90aacb" stroke-width="1.6"/>
<line x1="722.4" y1="746.5" x2="722.4" y2="747.5" stroke="#ff6d22" stroke-width="1.6"/>
<rect x="715.6" y="747.5" width="13.6" height="18.7" fill="#ff6d22"/>
<line x1="739.2" y1="736.5" x2="739.2" y2="742.8" stroke="#90aacb" stroke-width="1.6"/>
<line x1="739.2" y1="767.1" x2="739.2" y2="771" stroke="#90aacb" stroke-width="1.6"/>
<rect x="733.2" y="743.5999999999999" width="12.0" height="22.7" fill="none" stroke="#90aacb" stroke-width="1.6"/>
<line x1="755.9" y1="749.6" x2="755.9" y2="755" stroke="#ff6d22" stroke-width="1.6"/>
<rect x="749.1" y="742.8" width="13.6" height="6.8" fill="#ff6d22"/>
<line x1="772.7" y1="739.9" x2="772.7" y2="750" stroke="#ff6d22" stroke-width="1.6"/>
<rect x="765.9" y="750" width="13.6" height="3.5" fill="#ff6d22"/>
<line x1="789.4" y1="762.3" x2="789.4" y2="767" stroke="#ff6d22" stroke-width="1.6"/>
<rect x="782.6" y="767" width="13.6" height="11.6" fill="#ff6d22"/>
<line x1="806.2" y1="763.7" x2="806.2" y2="772.8" stroke="#90aacb" stroke-width="1.6"/>
<line x1="806.2" y1="779.8" x2="806.2" y2="784.6" stroke="#90aacb" stroke-width="1.6"/>
<rect x="800.2" y="773.5999999999999" width="12.0" height="5.4" fill="none" stroke="#90aacb" stroke-width="1.6"/>
<line x1="823.0" y1="742.3" x2="823.0" y2="749" stroke="#90aacb" stroke-width="1.6"/>
<rect x="817.0" y="749.8" width="12.0" height="22.8" fill="none" stroke="#90aacb" stroke-width="1.6"/>
<line x1="839.7" y1="731" x2="839.7" y2="739" stroke="#90aacb" stroke-width="1.6"/>
<line x1="839.7" y1="749.6" x2="839.7" y2="757.4" stroke="#90aacb" stroke-width="1.6"/>
<rect x="833.7" y="739.8" width="12.0" height="9.0" fill="none" stroke="#90aacb" stroke-width="1.6"/>
<line x1="856.5" y1="739.4" x2="856.5" y2="747.2" stroke="#ff6d22" stroke-width="1.6"/>
<rect x="849.7" y="737.5" width="13.6" height="2.0" fill="#ff6d22"/>
<line x1="873.2" y1="738.9" x2="873.2" y2="739.9" stroke="#ff6d22" stroke-width="1.6"/>
<rect x="866.4" y="739.9" width="13.6" height="34.0" fill="#ff6d22"/>
<line x1="890.0" y1="767.8" x2="890.0" y2="770.5" stroke="#90aacb" stroke-width="1.6"/>
<line x1="890.0" y1="774.5" x2="890.0" y2="783.3" stroke="#90aacb" stroke-width="1.6"/>
<rect x="884.0" y="771.3" width="12.0" height="2.4" fill="none" stroke="#90aacb" stroke-width="1.6"/>
<line x1="906.8" y1="755" x2="906.8" y2="763" stroke="#90aacb" stroke-width="1.6"/>
<line x1="906.8" y1="768.3" x2="906.8" y2="781.1" stroke="#90aacb" stroke-width="1.6"/>
<rect x="900.8" y="763.8" width="12.0" height="3.7" fill="none" stroke="#90aacb" stroke-width="1.6"/>
<line x1="923.5" y1="757.2" x2="923.5" y2="762.5" stroke="#ff6d22" stroke-width="1.6"/>
<line x1="923.5" y1="770" x2="923.5" y2="775.8" stroke="#ff6d22" stroke-width="1.6"/>
<rect x="916.7" y="762.5" width="13.6" height="7.5" fill="#ff6d22"/>
<line x1="940.3" y1="757.2" x2="940.3" y2="760.4" stroke="#90aacb" stroke-width="1.6"/>
<rect x="934.3" y="761.1999999999999" width="12.0" height="8.5" fill="none" stroke="#90aacb" stroke-width="1.6"/>
<line x1="957.0" y1="755" x2="957.0" y2="760.4" stroke="#ff6d22" stroke-width="1.6"/>
<line x1="957.0" y1="764.6" x2="957.0" y2="771" stroke="#ff6d22" stroke-width="1.6"/>
<rect x="950.2" y="760.4" width="13.6" height="4.2" fill="#ff6d22"/>
<line x1="973.8" y1="762" x2="973.8" y2="765.1" stroke="#ff6d22" stroke-width="1.6"/>
<line x1="973.8" y1="771" x2="973.8" y2="773.7" stroke="#ff6d22" stroke-width="1.6"/>
<rect x="967.0" y="765.1" width="13.6" height="5.9" fill="#ff6d22"/>
<line x1="990.6" y1="758.8" x2="990.6" y2="771" stroke="#90aacb" stroke-width="1.6"/>
<line x1="990.6" y1="771" x2="990.6" y2="774.7" stroke="#90aacb" stroke-width="1.6"/>
<line x1="983.8" y1="771" x2="997.4" y2="771" stroke="#90aacb" stroke-width="2.2"/>
<line x1="1007.3" y1="766.2" x2="1007.3" y2="771.5" stroke="#ff6d22" stroke-width="1.6"/>
<rect x="1000.5" y="771.5" width="13.6" height="7.0" fill="#ff6d22"/>
<line x1="1024.1" y1="808.8" x2="1024.1" y2="812.9" stroke="#ff6d22" stroke-width="1.6"/>
<line x1="1024.1" y1="834.9" x2="1024.1" y2="841.3" stroke="#ff6d22" stroke-width="1.6"/>
<rect x="1018.1" y="813.6999999999999" width="12.0" height="20.4" fill="none" stroke="#ff6d22" stroke-width="1.6"/>
<line x1="1040.8" y1="793.9" x2="1040.8" y2="801.4" stroke="#90aacb" stroke-width="1.6"/>
<line x1="1040.8" y1="813.6" x2="1040.8" y2="817.3" stroke="#90aacb" stroke-width="1.6"/>
<rect x="1034.8" y="802.1999999999999" width="12.0" height="10.6" fill="none" stroke="#90aacb" stroke-width="1.6"/>
<line x1="1057.6" y1="715" x2="1057.6" y2="733.2" stroke="#90aacb" stroke-width="1.6"/>
<rect x="1051.6" y="734.0" width="12.0" height="67.2" fill="none" stroke="#90aacb" stroke-width="1.6"/>
<line x1="1074.4" y1="723.5" x2="1074.4" y2="732.5" stroke="#90aacb" stroke-width="1.6"/>
<line x1="1074.4" y1="732.5" x2="1074.4" y2="747.8" stroke="#90aacb" stroke-width="1.6"/>
<line x1="1067.6" y1="732.5" x2="1081.2" y2="732.5" stroke="#90aacb" stroke-width="2.2"/>
<rect x="1085.1" y="713.5999999999999" width="12.0" height="19.2" fill="none" stroke="#90aacb" stroke-width="1.6"/>
<line x1="1107.9" y1="701.2" x2="1107.9" y2="704" stroke="#90aacb" stroke-width="1.6"/>
<line x1="1107.9" y1="714.4" x2="1107.9" y2="724.9" stroke="#90aacb" stroke-width="1.6"/>
<rect x="1101.9" y="704.8" width="12.0" height="8.8" fill="none" stroke="#90aacb" stroke-width="1.6"/>
<line x1="1124.6" y1="698.5" x2="1124.6" y2="704" stroke="#ff6d22" stroke-width="1.6"/>
<line x1="1124.6" y1="709.6" x2="1124.6" y2="717.2" stroke="#ff6d22" stroke-width="1.6"/>
<rect x="1117.8" y="704" width="13.6" height="5.6" fill="#ff6d22"/>
<line x1="1141.4" y1="679" x2="1141.4" y2="691.5" stroke="#90aacb" stroke-width="1.6"/>
<line x1="1141.4" y1="704.7" x2="1141.4" y2="709.6" stroke="#90aacb" stroke-width="1.6"/>
<rect x="1134.6" y="691.5" width="13.6" height="13.2" fill="#90aacb"/>
<line x1="1158.2" y1="738.75" x2="1158.2" y2="750.6" stroke="#ff6d22" stroke-width="1.6"/>
<rect x="1151.4" y="705" width="13.6" height="33.8" fill="#ff6d22"/>
<line x1="1174.9" y1="727.6" x2="1174.9" y2="738.75" stroke="#ff6d22" stroke-width="1.6"/>
<line x1="1174.9" y1="756.1" x2="1174.9" y2="758.2" stroke="#ff6d22" stroke-width="1.6"/>
<rect x="1168.1" y="738.75" width="13.6" height="17.4" fill="#ff6d22"/>
<line x1="1191.7" y1="746.4" x2="1191.7" y2="757.5" stroke="#ff6d22" stroke-width="1.6"/>
<line x1="1191.7" y1="757.5" x2="1191.7" y2="764.4" stroke="#ff6d22" stroke-width="1.6"/>
<line x1="1184.9" y1="757.5" x2="1198.5" y2="757.5" stroke="#ff6d22" stroke-width="2.2"/>
<rect x="1202.4" y="753.6999999999999" width="12.0" height="5.1" fill="none" stroke="#90aacb" stroke-width="1.6"/>
<line x1="1225.2" y1="764.4" x2="1225.2" y2="772.1" stroke="#ff6d22" stroke-width="1.6"/>
<rect x="1218.4" y="752.6" width="13.6" height="11.8" fill="#ff6d22"/>
<line x1="1235.2" y1="765.6" x2="1248.8" y2="765.6" stroke="#ff6d22" stroke-width="2.2"/>
<polyline points="44.0,749.7 68.8,772.5 85.5,737.0 102.3,702.3 119.0,713.6 135.8,715.5 152.6,703.2 169.3,682.0 186.1,699.4 202.8,608.3 219.6,610.6 236.4,619.8 253.1,632.5 269.9,631.5 286.6,623.2 303.4,614.5 320.2,644.1 336.9,673.8 353.7,653.4 370.4,628.0 387.2,625.0 404.0,613.0 420.7,619.3 437.5,629.0 454.2,628.0 471.0,640.2 487.8,633.0 504.5,635.4 521.3,653.4 538.0,655.3 554.8,725.4 571.6,704.0 588.3,710.9 605.1,721.6 621.8,726.4 638.6,730.3 655.4,728.9 672.1,738.0 688.9,749.3 705.6,741.5 722.4,761.6 739.2,729.2 755.9,741.8 772.7,746.7 789.4,781.7 806.2,766.1 823.0,732.1 839.7,722.9 856.5,731.1 873.2,774.9 890.0,766.7 906.8,751.8 923.5,760.9 940.3,751.8 957.0,759.3 973.8,767.8 990.6,766.7 1007.3,775.8 1024.1,821.6 1040.8,796.0 1057.6,698.5 1074.4,710.3 1091.1,692.2 1107.9,688.0 1124.6,702.6 1141.4,694.3 1158.2,739.4 1174.9,752.0 1191.7,749.2 1208.4,741.5 1225.2,760.3 1242.0,761.7" fill="none" stroke="#ff0000" stroke-width="1.3" stroke-linejoin="miter" />
<polyline points="44.0,763.0 68.8,788.2 85.5,754.7 102.3,721.2 119.0,731.6 135.8,728.8 152.6,715.0 169.3,692.7 186.1,713.0 202.8,623.0 219.6,625.2 236.4,633.0 253.1,644.6 269.9,641.7 286.6,632.0 303.4,626.6 320.2,657.3 336.9,688.0 353.7,671.8 370.4,644.6 387.2,640.7 404.0,628.0 420.7,636.8 437.5,644.6 454.2,644.6 471.0,656.8 487.8,648.0 504.5,648.0 521.3,665.5 538.0,665.5 554.8,738.6 571.6,719.1 588.3,726.4 605.1,736.6 621.8,736.6 638.6,740.5 655.4,739.0 672.1,747.8 688.9,764.4 705.6,756.6 722.4,777.8 739.2,746.7 755.9,757.9 772.7,761.8 789.4,796.3 806.2,779.8 823.0,748.6 839.7,739.9 856.5,748.2 873.2,793.9 890.0,785.4 906.8,770.0 923.5,779.0 940.3,765.7 957.0,772.6 973.8,779.5 990.6,776.3 1007.3,785.9 1024.1,835.4 1040.8,813.1 1057.6,727.0 1074.4,741.5 1091.1,722.0 1107.9,718.0 1124.6,719.3 1141.4,713.8 1158.2,760.3 1174.9,775.6 1191.7,774.2 1208.4,763.0 1225.2,775.6 1242.0,774.2" fill="none" stroke="#009800" stroke-width="1.3" stroke-linejoin="miter" />
<path d="M265.2,586 H271.2 V599 H277.6 L268.2,611 L258.8,599 H265.2 Z" fill="#ff0000"/>
<path d="M1236.6,687.5 H1245 V704 H1252.7 L1240.5,716 L1228.2,704 H1236.6 Z" fill="#ff0000"/>
<path d="M1085,809 H1093 V792 H1100.5 L1089,780.5 L1077.5,792 H1085 Z" fill="#009000"/>
<line x1="269" y1="124" x2="269" y2="186" stroke="#ff0000" stroke-width="1.3" stroke-dasharray="4 3"/>
<line x1="269" y1="219" x2="269" y2="342" stroke="#ff0000" stroke-width="1.3" stroke-dasharray="4 3"/>
<line x1="269" y1="375" x2="269" y2="551" stroke="#ff0000" stroke-width="1.3" stroke-dasharray="4 3"/>
<line x1="269" y1="609" x2="269" y2="864" stroke="#ff0000" stroke-width="1.3" stroke-dasharray="4 3"/>
<line x1="1090.5" y1="124" x2="1090.5" y2="186" stroke="#20d020" stroke-width="1.3"/>
<line x1="1242" y1="124" x2="1242" y2="186" stroke="#e00000" stroke-width="2"/>
<line x1="1090.5" y1="219" x2="1090.5" y2="342" stroke="#20d020" stroke-width="1.3"/>
<line x1="1242" y1="219" x2="1242" y2="342" stroke="#e00000" stroke-width="2"/>
<line x1="1090.5" y1="375" x2="1090.5" y2="551" stroke="#20d020" stroke-width="1.3"/>
<line x1="1242" y1="375" x2="1242" y2="551" stroke="#e00000" stroke-width="2"/>
<line x1="1090.5" y1="584" x2="1090.5" y2="864" stroke="#20d020" stroke-width="1.3"/>
<line x1="1242" y1="584" x2="1242" y2="864" stroke="#e00000" stroke-width="2"/>
<line x1="1855.5" y1="585" x2="1855.5" y2="864" stroke="#fff" stroke-width="1"/>
<line x1="1856" y1="585.5" x2="1860" y2="585.5" stroke="#fff" stroke-width="1"/>
<line x1="1856" y1="593.5" x2="1860" y2="593.5" stroke="#fff" stroke-width="1"/>
<line x1="1856" y1="600.5" x2="1860" y2="600.5" stroke="#fff" stroke-width="1"/>
<line x1="1856" y1="607.5" x2="1866" y2="607.5" stroke="#fff" stroke-width="1"/>
<line x1="1856" y1="615.5" x2="1860" y2="615.5" stroke="#fff" stroke-width="1"/>
<line x1="1856" y1="622.5" x2="1860" y2="622.5" stroke="#fff" stroke-width="1"/>
<line x1="1856" y1="629.5" x2="1860" y2="629.5" stroke="#fff" stroke-width="1"/>
<line x1="1856" y1="637.5" x2="1860" y2="637.5" stroke="#fff" stroke-width="1"/>
<line x1="1856" y1="644.5" x2="1866" y2="644.5" stroke="#fff" stroke-width="1"/>
<line x1="1856" y1="651.5" x2="1860" y2="651.5" stroke="#fff" stroke-width="1"/>
<line x1="1856" y1="659.5" x2="1860" y2="659.5" stroke="#fff" stroke-width="1"/>
<line x1="1856" y1="666.5" x2="1860" y2="666.5" stroke="#fff" stroke-width="1"/>
<line x1="1856" y1="673.5" x2="1860" y2="673.5" stroke="#fff" stroke-width="1"/>
<line x1="1856" y1="681.5" x2="1866" y2="681.5" stroke="#fff" stroke-width="1"/>
<line x1="1856" y1="688.5" x2="1860" y2="688.5" stroke="#fff" stroke-width="1"/>
<line x1="1856" y1="695.5" x2="1860" y2="695.5" stroke="#fff" stroke-width="1"/>
<line x1="1856" y1="703.5" x2="1860" y2="703.5" stroke="#fff" stroke-width="1"/>
<line x1="1856" y1="710.5" x2="1860" y2="710.5" stroke="#fff" stroke-width="1"/>
<line x1="1856" y1="717.5" x2="1866" y2="717.5" stroke="#fff" stroke-width="1"/>
<line x1="1856" y1="725.5" x2="1860" y2="725.5" stroke="#fff" stroke-width="1"/>
<line x1="1856" y1="732.5" x2="1860" y2="732.5" stroke="#fff" stroke-width="1"/>
<line x1="1856" y1="739.5" x2="1860" y2="739.5" stroke="#fff" stroke-width="1"/>
<line x1="1856" y1="747.5" x2="1860" y2="747.5" stroke="#fff" stroke-width="1"/>
<line x1="1856" y1="754.5" x2="1866" y2="754.5" stroke="#fff" stroke-width="1"/>
<line x1="1856" y1="761.5" x2="1860" y2="761.5" stroke="#fff" stroke-width="1"/>
<line x1="1856" y1="769.5" x2="1860" y2="769.5" stroke="#fff" stroke-width="1"/>
<line x1="1856" y1="776.5" x2="1860" y2="776.5" stroke="#fff" stroke-width="1"/>
<line x1="1856" y1="783.5" x2="1860" y2="783.5" stroke="#fff" stroke-width="1"/>
<line x1="1856" y1="791.5" x2="1866" y2="791.5" stroke="#fff" stroke-width="1"/>
<line x1="1856" y1="798.5" x2="1860" y2="798.5" stroke="#fff" stroke-width="1"/>
<line x1="1856" y1="805.5" x2="1860" y2="805.5" stroke="#fff" stroke-width="1"/>
<line x1="1856" y1="813.5" x2="1860" y2="813.5" stroke="#fff" stroke-width="1"/>
<line x1="1856" y1="820.5" x2="1860" y2="820.5" stroke="#fff" stroke-width="1"/>
<line x1="1856" y1="828.5" x2="1866" y2="828.5" stroke="#fff" stroke-width="1"/>
<line x1="1856" y1="835.5" x2="1860" y2="835.5" stroke="#fff" stroke-width="1"/>
<line x1="1856" y1="842.5" x2="1860" y2="842.5" stroke="#fff" stroke-width="1"/>
<line x1="1856" y1="850.5" x2="1860" y2="850.5" stroke="#fff" stroke-width="1"/>
<line x1="1856" y1="857.5" x2="1860" y2="857.5" stroke="#fff" stroke-width="1"/>
<clipPath id="c44_93"><rect x="44" y="865" width="49" height="19"/></clipPath>
<path d="M15.0,865 L34.0,884 M25.0,865 L44.0,884 M35.0,865 L54.0,884 M45.0,865 L64.0,884 M55.0,865 L74.0,884 M65.0,865 L84.0,884 M75.0,865 L94.0,884 M85.0,865 L104.0,884 M95.0,865 L114.0,884 M105.0,865 L124.0,884" stroke="#e00000" stroke-width="1.3" clip-path="url(#c44_93)"/>
<clipPath id="c93_277"><rect x="93" y="865" width="184" height="19"/></clipPath>
<path d="M64.0,884 L83.0,865 M74.0,884 L93.0,865 M84.0,884 L103.0,865 M94.0,884 L113.0,865 M104.0,884 L123.0,865 M114.0,884 L133.0,865 M124.0,884 L143.0,865 M134.0,884 L153.0,865 M144.0,884 L163.0,865 M154.0,884 L173.0,865 M164.0,884 L183.0,865 M174.0,884 L193.0,865 M184.0,884 L203.0,865 M194.0,884 L213.0,865 M204.0,884 L223.0,865 M214.0,884 L233.0,865 M224.0,884 L243.0,865 M234.0,884 L253.0,865 M244.0,884 L263.0,865 M254.0,884 L273.0,865 M264.0,884 L283.0,865 M274.0,884 L293.0,865 M284.0,884 L303.0,865 M294.0,884 L313.0,865" stroke="#008800" stroke-width="1.3" clip-path="url(#c93_277)"/>
<clipPath id="c378_546"><rect x="378" y="865" width="168" height="19"/></clipPath>
<path d="M349.0,884 L368.0,865 M359.0,884 L378.0,865 M369.0,884 L388.0,865 M379.0,884 L398.0,865 M389.0,884 L408.0,865 M399.0,884 L418.0,865 M409.0,884 L428.0,865 M419.0,884 L438.0,865 M429.0,884 L448.0,865 M439.0,884 L458.0,865 M449.0,884 L468.0,865 M459.0,884 L478.0,865 M469.0,884 L488.0,865 M479.0,884 L498.0,865 M489.0,884 L508.0,865 M499.0,884 L518.0,865 M509.0,884 L528.0,865 M519.0,884 L538.0,865 M529.0,884 L548.0,865 M539.0,884 L558.0,865 M549.0,884 L568.0,865 M559.0,884 L578.0,865" stroke="#008800" stroke-width="1.3" clip-path="url(#c378_546)"/>
<clipPath id="c546_1083"><rect x="546" y="865" width="537" height="19"/></clipPath>
<path d="M517.0,865 L536.0,884 M527.0,865 L546.0,884 M537.0,865 L556.0,884 M547.0,865 L566.0,884 M557.0,865 L576.0,884 M567.0,865 L586.0,884 M577.0,865 L596.0,884 M587.0,865 L606.0,884 M597.0,865 L616.0,884 M607.0,865 L626.0,884 M617.0,865 L636.0,884 M627.0,865 L646.0,884 M637.0,865 L656.0,884 M647.0,865 L666.0,884 M657.0,865 L676.0,884 M667.0,865 L686.0,884 M677.0,865 L696.0,884 M687.0,865 L706.0,884 M697.0,865 L716.0,884 M707.0,865 L726.0,884 M717.0,865 L736.0,884 M727.0,865 L746.0,884 M737.0,865 L756.0,884 M747.0,865 L766.0,884 M757.0,865 L776.0,884 M767.0,865 L786.0,884 M777.0,865 L796.0,884 M787.0,865 L806.0,884 M797.0,865 L816.0,884 M807.0,865 L826.0,884 M817.0,865 L836.0,884 M827.0,865 L846.0,884 M837.0,865 L856.0,884 M847.0,865 L866.0,884 M857.0,865 L876.0,884 M867.0,865 L886.0,884 M877.0,865 L896.0,884 M887.0,865 L906.0,884 M897.0,865 L916.0,884 M907.0,865 L926.0,884 M917.0,865 L936.0,884 M927.0,865 L946.0,884 M937.0,865 L956.0,884 M947.0,865 L966.0,884 M957.0,865 L976.0,884 M967.0,865 L986.0,884 M977.0,865 L996.0,884 M987.0,865 L1006.0,884 M997.0,865 L1016.0,884 M1007.0,865 L1026.0,884 M1017.0,865 L1036.0,884 M1027.0,865 L1046.0,884 M1037.0,865 L1056.0,884 M1047.0,865 L1066.0,884 M1057.0,865 L1076.0,884 M1067.0,865 L1086.0,884 M1077.0,865 L1096.0,884 M1087.0,865 L1106.0,884 M1097.0,865 L1116.0,884" stroke="#d00000" stroke-width="1.3" clip-path="url(#c546_1083)"/>
<clipPath id="c1083_1234"><rect x="1083" y="865" width="151" height="19"/></clipPath>
<path d="M1054.0,884 L1073.0,865 M1064.0,884 L1083.0,865 M1074.0,884 L1093.0,865 M1084.0,884 L1103.0,865 M1094.0,884 L1113.0,865 M1104.0,884 L1123.0,865 M1114.0,884 L1133.0,865 M1124.0,884 L1143.0,865 M1134.0,884 L1153.0,865 M1144.0,884 L1163.0,865 M1154.0,884 L1173.0,865 M1164.0,884 L1183.0,865 M1174.0,884 L1193.0,865 M1184.0,884 L1203.0,865 M1194.0,884 L1213.0,865 M1204.0,884 L1223.0,865 M1214.0,884 L1233.0,865 M1224.0,884 L1243.0,865 M1234.0,884 L1253.0,865 M1244.0,884 L1263.0,865" stroke="#008800" stroke-width="1.3" clip-path="url(#c1083_1234)"/>
<clipPath id="c1234_1258"><rect x="1234" y="865" width="24" height="19"/></clipPath>
<path d="M1205.0,865 L1224.0,884 M1215.0,865 L1234.0,884 M1225.0,865 L1244.0,884 M1235.0,865 L1254.0,884 M1245.0,865 L1264.0,884 M1255.0,865 L1274.0,884 M1265.0,865 L1284.0,884 M1275.0,865 L1294.0,884" stroke="#d00000" stroke-width="1.3" clip-path="url(#c1234_1258)"/>
<line x1="279" y1="870.5" x2="377" y2="870.5" stroke="#e8e800" stroke-width="1.5"/>
<line x1="279" y1="880.5" x2="377" y2="880.5" stroke="#e8e800" stroke-width="1.5"/>
<g transform="translate(66,870.5)" fill="none" stroke="#0000d0" stroke-width="1.6"><path d="M-5,-5.5 A7,7 0 1 0 5,-5.5"/><path d="M-3.3,-3.6 h1.5 M1.8,-3.6 h1.5"/><path d="M-3.5,0 Q0,4 3.5,0"/></g>
<g transform="translate(183,870.5)" fill="none" stroke="#0000d0" stroke-width="1.6"><path d="M-5,-5.5 A7,7 0 1 0 5,-5.5"/><path d="M-3.3,-3.6 h1.5 M1.8,-3.6 h1.5"/><path d="M-3.5,0 Q0,4 3.5,0"/></g>
<g transform="translate(326,870.5)" fill="none" stroke="#0000d0" stroke-width="1.6"><path d="M-5,-5.5 A7,7 0 1 0 5,-5.5"/><path d="M-3.3,-3.6 h1.5 M1.8,-3.6 h1.5"/><path d="M-4.3,1.3 H4"/></g>
<g transform="translate(460,870.5)" fill="none" stroke="#0000d0" stroke-width="1.6"><path d="M-5,-5.5 A7,7 0 1 0 5,-5.5"/><path d="M-3.3,-3.6 h1.5 M1.8,-3.6 h1.5"/><path d="M-3.5,0 Q0,4 3.5,0"/></g>
<g transform="translate(810,870.5)" fill="none" stroke="#0000d0" stroke-width="1.6"><path d="M-5,-5.5 A7,7 0 1 0 5,-5.5"/><path d="M-3.3,-3.6 h1.5 M1.8,-3.6 h1.5"/><path d="M-3.5,0 Q0,4 3.5,0"/></g>
<g transform="translate(1155,870.5)" fill="none" stroke="#0000d0" stroke-width="1.6"><path d="M-5,-5.5 A7,7 0 1 0 5,-5.5"/><path d="M-3.3,-3.6 h1.5 M1.8,-3.6 h1.5"/><path d="M-3.5,0 Q0,4 3.5,0"/></g>
<g transform="translate(1243,870.5)" fill="none" stroke="#0000d0" stroke-width="1.6"><path d="M-5,-5.5 A7,7 0 1 0 5,-5.5"/><path d="M-3.3,-3.6 h1.5 M1.8,-3.6 h1.5"/><path d="M-3.5,3 Q0,-1 3.5,3"/></g>
<line x1="44" y1="884.5" x2="1855" y2="884.5" stroke="#fff" stroke-width="1.5"/>
<line x1="44" y1="904.5" x2="1855" y2="904.5" stroke="#fff" stroke-width="1.5"/>
<line x1="86" y1="884" x2="86" y2="906" stroke="#fff" stroke-width="1.5"/>
<line x1="203" y1="884" x2="203" y2="906" stroke="#fff" stroke-width="1.5"/>
<line x1="320.5" y1="884" x2="320.5" y2="906" stroke="#fff" stroke-width="1.5"/>
<line x1="437" y1="884" x2="437" y2="906" stroke="#fff" stroke-width="1.5"/>
<line x1="554" y1="884" x2="554" y2="906" stroke="#fff" stroke-width="1.5"/>
<line x1="671.5" y1="884" x2="671.5" y2="906" stroke="#fff" stroke-width="1.5"/>
<line x1="789" y1="884" x2="789" y2="906" stroke="#fff" stroke-width="1.5"/>
<line x1="906.5" y1="884" x2="906.5" y2="906" stroke="#fff" stroke-width="1.5"/>
<line x1="1024" y1="884" x2="1024" y2="906" stroke="#fff" stroke-width="1.5"/>
<line x1="1142" y1="884" x2="1142" y2="906" stroke="#fff" stroke-width="1.5"/>
<line x1="1376" y1="884" x2="1376" y2="906" stroke="#fff" stroke-width="1.5"/>
<line x1="86" y1="904" x2="86" y2="924" stroke="#fff" stroke-width="1.5"/>
<line x1="1778" y1="884" x2="1778" y2="906" stroke="#fff" stroke-width="1.5"/>
<line x1="1795" y1="884" x2="1795" y2="906" stroke="#fff" stroke-width="1.5"/>
<line x1="1828" y1="884" x2="1828" y2="906" stroke="#fff" stroke-width="1.5"/>
<line x1="52.0" y1="884" x2="52.0" y2="892" stroke="#fff" stroke-width="1.3"/>
<line x1="68.8" y1="884" x2="68.8" y2="892" stroke="#fff" stroke-width="1.3"/>
<line x1="102.3" y1="884" x2="102.3" y2="892" stroke="#fff" stroke-width="1.3"/>
<line x1="119.0" y1="884" x2="119.0" y2="892" stroke="#fff" stroke-width="1.3"/>
<line x1="135.8" y1="884" x2="135.8" y2="892" stroke="#fff" stroke-width="1.3"/>
<line x1="152.5" y1="884" x2="152.5" y2="892" stroke="#fff" stroke-width="1.3"/>
<line x1="169.3" y1="884" x2="169.3" y2="892" stroke="#fff" stroke-width="1.3"/>
<line x1="186.0" y1="884" x2="186.0" y2="892" stroke="#fff" stroke-width="1.3"/>
<line x1="219.5" y1="884" x2="219.5" y2="892" stroke="#fff" stroke-width="1.3"/>
<line x1="236.3" y1="884" x2="236.3" y2="892" stroke="#fff" stroke-width="1.3"/>
<line x1="253.1" y1="884" x2="253.1" y2="892" stroke="#fff" stroke-width="1.3"/>
<line x1="269.8" y1="884" x2="269.8" y2="892" stroke="#fff" stroke-width="1.3"/>
<line x1="286.6" y1="884" x2="286.6" y2="892" stroke="#fff" stroke-width="1.3"/>
<line x1="303.3" y1="884" x2="303.3" y2="892" stroke="#fff" stroke-width="1.3"/>
<line x1="336.8" y1="884" x2="336.8" y2="892" stroke="#fff" stroke-width="1.3"/>
<line x1="353.6" y1="884" x2="353.6" y2="892" stroke="#fff" stroke-width="1.3"/>
<line x1="370.3" y1="884" x2="370.3" y2="892" stroke="#fff" stroke-width="1.3"/>
<line x1="387.1" y1="884" x2="387.1" y2="892" stroke="#fff" stroke-width="1.3"/>
<line x1="403.9" y1="884" x2="403.9" y2="892" stroke="#fff" stroke-width="1.3"/>
<line x1="420.6" y1="884" x2="420.6" y2="892" stroke="#fff" stroke-width="1.3"/>
<line x1="454.1" y1="884" x2="454.1" y2="892" stroke="#fff" stroke-width="1.3"/>
<line x1="470.9" y1="884" x2="470.9" y2="892" stroke="#fff" stroke-width="1.3"/>
<line x1="487.6" y1="884" x2="487.6" y2="892" stroke="#fff" stroke-width="1.3"/>
<line x1="504.4" y1="884" x2="504.4" y2="892" stroke="#fff" stroke-width="1.3"/>
<line x1="521.1" y1="884" x2="521.1" y2="892" stroke="#fff" stroke-width="1.3"/>
<line x1="537.9" y1="884" x2="537.9" y2="892" stroke="#fff" stroke-width="1.3"/>
<line x1="571.4" y1="884" x2="571.4" y2="892" stroke="#fff" stroke-width="1.3"/>
<line x1="588.2" y1="884" x2="588.2" y2="892" stroke="#fff" stroke-width="1.3"/>
<line x1="604.9" y1="884" x2="604.9" y2="892" stroke="#fff" stroke-width="1.3"/>
<line x1="621.7" y1="884" x2="621.7" y2="892" stroke="#fff" stroke-width="1.3"/>
<line x1="638.4" y1="884" x2="638.4" y2="892" stroke="#fff" stroke-width="1.3"/>
<line x1="655.2" y1="884" x2="655.2" y2="892" stroke="#fff" stroke-width="1.3"/>
<line x1="705.4" y1="884" x2="705.4" y2="892" stroke="#fff" stroke-width="1.3"/>
<line x1="722.2" y1="884" x2="722.2" y2="892" stroke="#fff" stroke-width="1.3"/>
<line x1="739.0" y1="884" x2="739.0" y2="892" stroke="#fff" stroke-width="1.3"/>
<line x1="755.7" y1="884" x2="755.7" y2="892" stroke="#fff" stroke-width="1.3"/>
<line x1="772.5" y1="884" x2="772.5" y2="892" stroke="#fff" stroke-width="1.3"/>
<line x1="822.7" y1="884" x2="822.7" y2="892" stroke="#fff" stroke-width="1.3"/>
<line x1="839.5" y1="884" x2="839.5" y2="892" stroke="#fff" stroke-width="1.3"/>
<line x1="856.2" y1="884" x2="856.2" y2="892" stroke="#fff" stroke-width="1.3"/>
<line x1="873.0" y1="884" x2="873.0" y2="892" stroke="#fff" stroke-width="1.3"/>
<line x1="889.8" y1="884" x2="889.8" y2="892" stroke="#fff" stroke-width="1.3"/>
<line x1="940.0" y1="884" x2="940.0" y2="892" stroke="#fff" stroke-width="1.3"/>
<line x1="956.8" y1="884" x2="956.8" y2="892" stroke="#fff" stroke-width="1.3"/>
<line x1="973.5" y1="884" x2="973.5" y2="892" stroke="#fff" stroke-width="1.3"/>
<line x1="990.3" y1="884" x2="990.3" y2="892" stroke="#fff" stroke-width="1.3"/>
<line x1="1007.0" y1="884" x2="1007.0" y2="892" stroke="#fff" stroke-width="1.3"/>
<line x1="1057.3" y1="884" x2="1057.3" y2="892" stroke="#fff" stroke-width="1.3"/>
<line x1="1074.1" y1="884" x2="1074.1" y2="892" stroke="#fff" stroke-width="1.3"/>
<line x1="1090.8" y1="884" x2="1090.8" y2="892" stroke="#fff" stroke-width="1.3"/>
<line x1="1107.6" y1="884" x2="1107.6" y2="892" stroke="#fff" stroke-width="1.3"/>
<line x1="1124.3" y1="884" x2="1124.3" y2="892" stroke="#fff" stroke-width="1.3"/>
<line x1="1174.6" y1="884" x2="1174.6" y2="892" stroke="#fff" stroke-width="1.3"/>
<line x1="1191.3" y1="884" x2="1191.3" y2="892" stroke="#fff" stroke-width="1.3"/>
<line x1="1208.1" y1="884" x2="1208.1" y2="892" stroke="#fff" stroke-width="1.3"/>
<line x1="1224.8" y1="884" x2="1224.8" y2="892" stroke="#fff" stroke-width="1.3"/>
<line x1="1241.6" y1="884" x2="1241.6" y2="892" stroke="#fff" stroke-width="1.3"/>
<line x1="1258.4" y1="884" x2="1258.4" y2="892" stroke="#fff" stroke-width="1.3"/>
<line x1="1275.1" y1="884" x2="1275.1" y2="892" stroke="#fff" stroke-width="1.3"/>
<line x1="1291.9" y1="884" x2="1291.9" y2="892" stroke="#fff" stroke-width="1.3"/>
<line x1="1308.6" y1="884" x2="1308.6" y2="892" stroke="#fff" stroke-width="1.3"/>
<line x1="1325.4" y1="884" x2="1325.4" y2="892" stroke="#fff" stroke-width="1.3"/>
<line x1="1342.1" y1="884" x2="1342.1" y2="892" stroke="#fff" stroke-width="1.3"/>
<line x1="1358.9" y1="884" x2="1358.9" y2="892" stroke="#fff" stroke-width="1.3"/>
<line x1="1409.2" y1="884" x2="1409.2" y2="892" stroke="#fff" stroke-width="1.3"/>
<line x1="1425.9" y1="884" x2="1425.9" y2="892" stroke="#fff" stroke-width="1.3"/>
<line x1="1442.7" y1="884" x2="1442.7" y2="892" stroke="#fff" stroke-width="1.3"/>
<line x1="1459.4" y1="884" x2="1459.4" y2="892" stroke="#fff" stroke-width="1.3"/>
<line x1="1476.2" y1="884" x2="1476.2" y2="892" stroke="#fff" stroke-width="1.3"/>
<line x1="1492.9" y1="884" x2="1492.9" y2="892" stroke="#fff" stroke-width="1.3"/>
<line x1="1509.7" y1="884" x2="1509.7" y2="892" stroke="#fff" stroke-width="1.3"/>
<line x1="1526.4" y1="884" x2="1526.4" y2="892" stroke="#fff" stroke-width="1.3"/>
<line x1="1543.2" y1="884" x2="1543.2" y2="892" stroke="#fff" stroke-width="1.3"/>
<line x1="1559.9" y1="884" x2="1559.9" y2="892" stroke="#fff" stroke-width="1.3"/>
<line x1="1576.7" y1="884" x2="1576.7" y2="892" stroke="#fff" stroke-width="1.3"/>
<line x1="1593.5" y1="884" x2="1593.5" y2="892" stroke="#fff" stroke-width="1.3"/>
<line x1="1610.2" y1="884" x2="1610.2" y2="892" stroke="#fff" stroke-width="1.3"/>
<line x1="1627.0" y1="884" x2="1627.0" y2="892" stroke="#fff" stroke-width="1.3"/>
<line x1="1643.7" y1="884" x2="1643.7" y2="892" stroke="#fff" stroke-width="1.3"/>
<line x1="1660.5" y1="884" x2="1660.5" y2="892" stroke="#fff" stroke-width="1.3"/>
<line x1="1677.2" y1="884" x2="1677.2" y2="892" stroke="#fff" stroke-width="1.3"/>
<line x1="1694.0" y1="884" x2="1694.0" y2="892" stroke="#fff" stroke-width="1.3"/>
<line x1="1710.7" y1="884" x2="1710.7" y2="892" stroke="#fff" stroke-width="1.3"/>
<line x1="1727.5" y1="884" x2="1727.5" y2="892" stroke="#fff" stroke-width="1.3"/>
<line x1="1744.3" y1="884" x2="1744.3" y2="892" stroke="#fff" stroke-width="1.3"/>
<line x1="1761.0" y1="884" x2="1761.0" y2="892" stroke="#fff" stroke-width="1.3"/></svg>
<div class="xl" style="left:88px">3</div><div class="xl" style="left:205px">4</div><div class="xl" style="left:322.5px">5</div><div class="xl" style="left:439px">6</div><div class="xl" style="left:556px">7</div><div class="xl" style="left:673.5px">10</div><div class="xl" style="left:791px">11</div><div class="xl" style="left:908.5px">12</div><div class="xl" style="left:1026px">13</div><div class="xl" style="left:1144px">14</div><div class="xl" style="left:1378px">15</div><div class="xl" style="left:1797px">16</div><div class="xl" style="left:1831px">16</div>
<div class="a" style="left:1825px;top:-2px;width:89px;height:17px;border:1px solid #555;border-top:none;border-radius:0 0 4px 4px;background:linear-gradient(#3a3a3a,#1a1a1a)">
<div class="a" style="left:27px;top:0;width:1px;height:15px;background:#444"></div><div class="a" style="left:57px;top:0;width:1px;height:15px;background:#444"></div>
<svg class="a" style="left:0;top:0" width="89" height="17"><rect x="9" y="9" width="11" height="2.5" fill="#c8c8c8"/>
<rect x="35" y="6" width="10" height="6" fill="none" stroke="#c0c0c0" stroke-width="2"/><path d="M39,4 V1 H49 V8 H45" fill="none" stroke="#c0c0c0" stroke-width="2"/>
<path d="M68,1 L77,10 M77,1 L68,10" stroke="#c8c8c8" stroke-width="2.6"/></svg></div>
<div class="a" style="left:1850px;top:34px;width:64px;height:16px;border:1px solid #a9c3d3;border-radius:3px;background:linear-gradient(#f2f6f8,#c9dbe6)">
<svg class="a" style="left:0;top:0" width="64" height="16"><rect x="5" y="9" width="11" height="2.5" fill="#3e5b6b"/>
<rect x="24" y="7" width="9" height="5" fill="none" stroke="#3e5b6b" stroke-width="2.2"/><path d="M28,5 V2 H37 V7 H33" fill="none" stroke="#3e5b6b" stroke-width="2.2"/>
<path d="M46,3 L54,11 M54,3 L46,11" stroke="#3e5b6b" stroke-width="2.4"/></svg>
<div class="a" style="left:20px;top:1px;width:1px;height:13px;background:#fff"></div><div class="a" style="left:42px;top:1px;width:1px;height:13px;background:#fff"></div></div>
<svg class="a" style="left:11px;top:64px" width="25" height="25" viewBox="0 0 25 25"><defs><linearGradient id="pg" x1="0" y1="0" x2="1" y2="1"><stop offset="0" stop-color="#c07030"/><stop offset="0.45" stop-color="#5a3a30"/><stop offset="1" stop-color="#b03810"/></linearGradient></defs><rect width="25" height="25" fill="url(#pg)"/><path d="M0,8 Q8,0 14,6 T25,4 M0,18 Q10,10 16,18 T25,22 M3,25 Q8,14 20,12" fill="none" stroke="#e09050" stroke-width="1" opacity="0.5"/><path d="M6,12 Q12,22 25,16" fill="none" stroke="#f0e0d0" stroke-width="0.8" opacity="0.45"/><text x="6.5" y="19.5" font-family="Liberation Sans" font-weight="bold" font-size="16" fill="#f0f0f0" stroke="#2a2a2a" stroke-width="1.6" paint-order="stroke">P</text></svg>
<div class="a" style="left:49px;top:57px;width:2px;height:37px;background:#cfcfcf;border-left:1px solid #b8b8b8"></div>
<div class="a" style="left:57px;top:58px;width:9px;height:36px;background:linear-gradient(90deg,#c8c8c8,#e0e0e0,#bdbdbd)"><div class="a" style="left:3px;top:16px;width:4px;height:4px;background:#555"></div></div><div class="a" style="left:67px;top:58px;width:1px;height:36px;background:#9a9a9a"></div>
<svg class="a" style="left:74px;top:65px" width="21" height="22" viewBox="0 0 21 22"><path d="M2,1 H14 L20,7 V21 H2 Z" fill="#a8d4ee" stroke="#7a7a7a" stroke-width="1.5"/><path d="M14,1 V7 H20" fill="#fff" stroke="#7a7a7a" stroke-width="1.2"/></svg>
<svg class="a" style="left:107px;top:66px" width="24" height="20" viewBox="0 0 24 20"><path d="M1,3 H9 L11,5 H20 V18 H1 Z" fill="#f4f4f4" stroke="#8a8a8a" stroke-width="1.3"/><path d="M1,18 L5,10 H23 L19,18 Z" fill="#b8d4ea" stroke="#7a8a9a" stroke-width="1.2"/></svg>
<svg class="a" style="left:140px;top:65px" width="23" height="23" viewBox="0 0 23 23"><rect x="1" y="1" width="21" height="21" rx="2" fill="#d8d8d8" stroke="#777" stroke-width="1.4"/><rect x="4" y="2" width="15" height="9" fill="#f6b0b8"/><rect x="5" y="14" width="13" height="7" fill="#8a8a8a"/><rect x="13" y="15" width="3" height="5" fill="#eee"/></svg>
<div class="a" style="left:171px;top:62px;width:1px;height:28px;background:#8c8c8c"></div>
<svg class="a" style="left:181px;top:66px" width="24" height="21" viewBox="0 0 24 21"><rect x="2" y="3" width="20" height="8" rx="2" fill="#f0f0f0" stroke="#808080" stroke-width="1.3"/><rect x="5" y="9" width="14" height="11" fill="#e8f0e0" stroke="#808080" stroke-width="1.3"/><path d="M7,13 H16 M7,16 H12" stroke="#606060" stroke-width="1.2"/><circle cx="19" cy="6" r="1" fill="#40b040"/></svg>
<svg class="a" style="left:215px;top:65px" width="23" height="23" viewBox="0 0 23 23"><rect x="1" y="1" width="16" height="16" fill="#e8e8e8" stroke="#aaa"/><circle cx="10" cy="10" r="6" fill="#a8cce8" stroke="#404040" stroke-width="2"/><path d="M14,14 L21,21" stroke="#303030" stroke-width="3.2"/></svg>
<div class="a" style="left:247px;top:62px;width:1px;height:28px;background:#8c8c8c"></div>
<svg class="a" style="left:259px;top:65px" width="19" height="22" viewBox="0 0 19 22"><path d="M5,1 L12,15 M14,1 L7,15" stroke="#707070" stroke-width="2"/><circle cx="5" cy="18" r="3" fill="none" stroke="#505050" stroke-width="1.8"/><circle cx="14" cy="18" r="3" fill="none" stroke="#505050" stroke-width="1.8"/></svg>
<svg class="a" style="left:290px;top:65px" width="23" height="23" viewBox="0 0 23 23"><path d="M1,1 H10 L13,4 V16 H1 Z" fill="#f4f4f4" stroke="#888" stroke-width="1.2"/><path d="M9,7 H18 L22,11 V22 H9 Z" fill="#f4f4f4" stroke="#888" stroke-width="1.2"/><path d="M11,13 H19 M11,16 H19 M11,19 H19" stroke="#aaa"/></svg>
<svg class="a" style="left:325px;top:64px" width="22" height="24" viewBox="0 0 22 24"><rect x="1" y="4" width="20" height="19" rx="2" fill="#e4e4e4" stroke="#808080" stroke-width="1.3"/><rect x="6" y="1" width="10" height="5" rx="1" fill="#d0d0d0" stroke="#808080"/><rect x="4" y="9" width="14" height="11" fill="#fafafa" stroke="#999"/><path d="M6,13 H14 M6,16 H12" stroke="#999"/></svg>
<div class="a" style="left:355px;top:62px;width:1px;height:28px;background:#8c8c8c"></div>
<svg class="a" style="left:367px;top:67px" width="21" height="19" viewBox="0 0 21 19"><path d="M18,17 C19,9 13,6 8,7 V3 L1,9 L8,14 V10 C12,9 15,11 18,17 Z" fill="#6a6a6a" stroke="#505050" stroke-width="0.8"/></svg>
<div class="a" style="left:397px;top:62px;width:1px;height:28px;background:#8c8c8c"></div>
<svg class="a" style="left:405px;top:63px" width="26" height="26" viewBox="0 0 26 26"><circle cx="13" cy="13" r="8" fill="#e0ecf4" stroke="#3a8fc8" stroke-width="2.2"/><path d="M13,1 V25 M1,13 H25" stroke="#3a8fc8" stroke-width="2.2"/><circle cx="13" cy="13" r="2" fill="#fff"/></svg>
<svg class="a" style="left:439px;top:64px" width="25" height="24" viewBox="0 0 25 24"><rect x="1" y="1" width="14" height="12" fill="none" stroke="#555" stroke-width="1.4" stroke-dasharray="2 2"/><circle cx="13" cy="12" r="6" fill="#a8cce8" stroke="#404040" stroke-width="2"/><path d="M17,16 L23,22" stroke="#303030" stroke-width="3"/></svg>
<div class="a" style="left:472px;top:62px;width:1px;height:28px;background:#8c8c8c"></div>
<div class="a" style="left:477px;top:62px;width:219px;height:29px;background:#fff;border:1px solid #a0a0a0;border-radius:2px"></div>
<div class="a" style="left:483px;top:69px;width:16px;height:16px;background:linear-gradient(#3a7ad8,#1a4aa8);border:1px solid #1a3a80"><div class="a" style="left:3px;top:-2px;font:italic 15px 'Liberation Serif',serif;color:#fff">f</div></div>
<div class="a" style="left:503px;top:68px;font-size:14px;color:#111;transform:scaleX(0.948);transform-origin:0 0">Maquineta Delfos</div>
<svg class="a" style="left:678px;top:72px" width="14" height="9" viewBox="0 0 14 9"><path d="M1,1 L7,7 L13,1" fill="none" stroke="#505050" stroke-width="1.4"/></svg>
<div class="a" style="left:699px;top:62px;width:1px;height:28px;background:#8c8c8c"></div>
<svg class="a" style="left:709px;top:64px" width="22" height="23" viewBox="0 0 22 23"><ellipse cx="11" cy="9" rx="10" ry="3" fill="#404040"/><path d="M4,8 Q11,-2 18,8 Z" fill="#303030"/><path d="M5,10 Q5,21 11,22 Q17,21 17,10 Z" fill="#f0d8c8" stroke="#806050"/><circle cx="8.5" cy="14" r="1" fill="#222"/><circle cx="13.5" cy="14" r="1" fill="#222"/></svg>
<svg class="a" style="left:743px;top:64px" width="23" height="24" viewBox="0 0 23 24"><text x="1" y="18" font-family="Liberation Serif" font-style="italic" font-size="22" fill="#e060a0">f</text><text x="10" y="22" font-family="Liberation Serif" font-size="10" fill="#e060a0">(x)</text></svg>
<svg class="a" style="left:780px;top:64px" width="16" height="24" viewBox="0 0 16 24"><text x="0" y="21" font-family="Liberation Sans" font-weight="bold" font-size="23" fill="#10a030">$</text></svg>
<svg class="a" style="left:809px;top:64px" width="25" height="24" viewBox="0 0 25 24"><rect x="2" y="2" width="6" height="6" fill="#9a8a50"/><rect x="16" y="2" width="6" height="6" fill="#9a8a50"/><rect x="1" y="7" width="9" height="15" rx="2" fill="#7a7a7a" stroke="#404040"/><rect x="14" y="7" width="9" height="15" rx="2" fill="#7a7a7a" stroke="#404040"/><rect x="9" y="10" width="6" height="6" fill="#505050"/><rect x="1" y="19" width="9" height="4" fill="#d8b030"/><rect x="14" y="19" width="9" height="4" fill="#d8b030"/></svg>
<svg class="a" style="left:842px;top:67px" width="27" height="18" viewBox="0 0 27 18"><path d="M1,6 V12 M4,6 V12 M7,6 V12" stroke="#4aa8e8" stroke-width="1.5"/><path d="M9,6.5 H17 V2 L26,9 L17,16 V11.5 H9 Z" fill="#4aa8e8"/></svg>
<svg class="a" style="left:877px;top:64px" width="24" height="24" viewBox="0 0 24 24"><path d="M9,1 H15 V7 H19 L12,13 L5,7 H9 Z" fill="#3aa0e0"/><rect x="2" y="14" width="20" height="8" rx="1" fill="#f4f4f4" stroke="#707070" stroke-width="1.3"/><circle cx="18" cy="18" r="1" fill="#40b040"/></svg>
<svg class="a" style="left:911px;top:64px" width="22" height="24" viewBox="0 0 22 24"><rect x="8" y="1" width="6" height="11" rx="2" fill="#8898a8" stroke="#506070"/><path d="M6,21 Q3,12 11,12 Q19,12 16,18" fill="none" stroke="#2a70c0" stroke-width="2"/><rect x="1" y="20" width="20" height="3" fill="#2a70c0"/></svg>
<svg class="a" style="left:945px;top:63px" width="26" height="26" viewBox="0 0 26 26"><rect x="1" y="1" width="22" height="23" fill="#f4f8fc" stroke="#305080" stroke-width="1.5"/><path d="M4,5 H19 M4,9 H12" stroke="#90a0b0"/><circle cx="16" cy="16" r="5" fill="#b8d8f0" stroke="#404040" stroke-width="1.8"/><path d="M19,19 L24,24" stroke="#303030" stroke-width="2.6"/></svg>
<svg class="a" style="left:980px;top:64px" width="25" height="24" viewBox="0 0 25 24"><path d="M2,3 L2,16 L6,13 L9,19 L11,18 L8,12 L13,12 Z" fill="#e8e8e8" stroke="#606060" stroke-width="1.2"/><text x="11" y="20" font-family="Liberation Sans" font-weight="bold" font-size="20" fill="#30a030">?</text></svg>
<div class="a" style="left:1016px;top:57px;width:1px;height:37px;background:#8c8c8c"></div>
<div class="a" style="left:1023px;top:58px;width:9px;height:36px;background:linear-gradient(90deg,#c8c8c8,#e0e0e0,#bdbdbd)"><div class="a" style="left:3px;top:16px;width:4px;height:4px;background:#555"></div></div><div class="a" style="left:1033px;top:58px;width:1px;height:36px;background:#9a9a9a"></div>
<svg class="a" style="left:1038px;top:64px" width="25" height="24" viewBox="0 0 25 24"><rect x="1" y="1" width="15" height="11" fill="#eee" stroke="#999"/><rect x="4" y="5" width="15" height="11" fill="#eee" stroke="#999"/><rect x="8" y="11" width="16" height="12" fill="#f4f4f4" stroke="#777" stroke-width="1.2"/><path d="M10,20 L14,16 L17,18 L22,14" stroke="#888" fill="none"/></svg>
<svg class="a" style="left:1071px;top:64px" width="26" height="25" viewBox="0 0 26 25"><rect x="1" y="1" width="24" height="23" fill="#f4f4f4" stroke="#808080" stroke-width="1.3"/><path d="M13,1 V24" stroke="#808080" stroke-width="1.3"/><path d="M1,4 H25" stroke="#aaa"/><path d="M3,16 L6,9 L10,14 M15,14 L18,8 L23,11" stroke="#888" fill="none"/></svg>
<svg class="a" style="left:1105px;top:64px" width="27" height="25" viewBox="0 0 27 25"><rect x="1" y="1" width="25" height="23" fill="#f4f4f4" stroke="#808080" stroke-width="1.3"/><path d="M1,12.5 H26" stroke="#808080" stroke-width="1.3"/><path d="M3,9 L8,6 L13,9 L18,5 L23,8 M3,20 L8,17 L13,20 L18,16 L23,19" stroke="#888" fill="none"/></svg>
<svg class="a" style="left:1139px;top:65px" width="25" height="23" viewBox="0 0 25 23"><rect x="1" y="1" width="23" height="21" fill="#f4f4f4" stroke="#808080" stroke-width="1.3"/><path d="M12.5,1 V22 M1,11.5 H24" stroke="#808080" stroke-width="1.3"/><path d="M3,9 L6,5 L10,8 M15,9 L18,5 L22,8 M3,19 L6,15 L10,18 M15,19 L18,15 L22,18" stroke="#999" fill="none"/></svg>
<svg class="a" style="left:1173px;top:65px" width="26" height="23" viewBox="0 0 26 23"><rect x="1" y="1" width="24" height="21" fill="#ececec" stroke="#808080" stroke-width="1.3"/><path d="M3,9 L7,6 L10,8 M16,8 L20,5 L23,7 M3,19 L7,16 L10,18" stroke="#bbb" fill="none"/><path d="M18.0,10.2 L20.2,10.3 L20.2,12.7 L18.0,12.8 L17.5,14.2 L19.0,15.7 L17.2,17.5 L15.7,16.0 L14.3,16.5 L14.2,18.7 L11.8,18.7 L11.7,16.5 L10.3,16.0 L8.8,17.5 L7.0,15.7 L8.5,14.2 L8.0,12.8 L5.8,12.7 L5.8,10.3 L8.0,10.2 L8.5,8.8 L7.0,7.3 L8.8,5.5 L10.3,7.0 L11.7,6.5 L11.8,4.3 L14.2,4.3 L14.3,6.5 L15.7,7.0 L17.2,5.5 L19.0,7.3 L17.5,8.8 Z" fill="#303030"/><circle cx="13" cy="11.5" r="5.4" fill="#303030"/><circle cx="13" cy="11.5" r="2" fill="#f4f4f4"/></svg>
<div class="a" style="left:1211px;top:57px;width:1px;height:37px;background:#8c8c8c"></div>
<div class="a" style="left:4px;top:102px;width:37px;height:8px;background:linear-gradient(#d8d8d8,#c4c4c4)"><div class="a" style="left:17px;top:2px;width:4px;height:4px;background:#666"></div></div>
<div class="a" style="left:4px;top:113px;width:33px;height:30px;border:1px solid #9fd0f6;border-radius:3px;background:#d6eafa"></div>
<svg class="a" style="left:11px;top:117px" width="20" height="22" viewBox="0 0 20 22"><path d="M2,2 L4,17 L8,13 L12,20 L15,18 L11,11 L17,10 Z" fill="#b8ddfa" stroke="#2a6ab8" stroke-width="1.6" stroke-linejoin="round"/></svg>
<div class="a" style="left:8px;top:149px;width:25px;height:24px;border:1px solid #b0b0b0;background:linear-gradient(135deg,#fafafa,#d8d8d8)"><svg width="23" height="22"><path d="M11.5,3 V19 M3.5,11 H19.5" stroke="#444" stroke-width="2.4"/></svg></div>
<div class="a" style="left:6px;top:180px;width:29px;height:1px;background:#a8a8a8"></div>
<div class="a" style="left:8px;top:189px;width:25px;height:24px;border:1px solid #b0b0b0;background:linear-gradient(135deg,#fafafa,#d8d8d8)"><svg width="23" height="22"><path d="M3,3 L20,20" stroke="#333" stroke-width="2"/></svg></div>
<div class="a" style="left:8px;top:221px;width:25px;height:24px;border:1px solid #b0b0b0;background:linear-gradient(135deg,#fafafa,#d8d8d8)"><svg width="23" height="22"><path d="M3,11.5 H20" stroke="#333" stroke-width="2.4"/></svg></div>
<div class="a" style="left:8px;top:254px;width:25px;height:24px;border:1px solid #b0b0b0;background:linear-gradient(135deg,#fafafa,#d8d8d8)"><svg width="23" height="22"><path d="M11.5,3 V20" stroke="#333" stroke-width="2.4"/></svg></div>
<div class="a" style="left:8px;top:287px;width:25px;height:24px;border:1px solid #b0b0b0;background:linear-gradient(135deg,#fafafa,#d8d8d8)"><svg width="23" height="22"><path d="M3,3 L20,20" stroke="#333" stroke-width="1.8"/><text x="12" y="10" font-size="9" fill="#333" font-family="Liberation Sans">L</text><text x="3" y="20" font-size="9" fill="#333" font-family="Liberation Sans">S</text></svg></div>
<div class="a" style="left:0px;top:324px;width:41px;height:1px;background:#b8b8b8"></div>
<div class="a" style="left:4px;top:330px;width:37px;height:9px;background:linear-gradient(#d8d8d8,#c4c4c4)"><div class="a" style="left:17px;top:2px;width:4px;height:4px;background:#666"></div></div>
<div class="a" style="left:5px;top:342px;width:15px;height:31px;border:1px solid #b4b4b4;background:#eaeaea"><svg width="13" height="29"><path d="M4,14 L9,10 V18 Z" fill="#111"/></svg></div>
<div class="a" style="left:21px;top:342px;width:15px;height:31px;border:1px solid #b4b4b4;background:#eaeaea"><svg width="13" height="29"><path d="M9,14 L4,10 V18 Z" fill="#111"/></svg></div>
<div class="a" style="left:6px;top:377px;width:29px;height:1px;background:#a8a8a8"></div>
<div class="a" style="left:8px;top:385px;width:25px;height:24px;border:1px solid #b0b0b0;background:linear-gradient(135deg,#fafafa,#d8d8d8)"><div style="font-size:14px;color:#222;text-align:center;margin-top:2px;letter-spacing:-0.8px;-webkit-text-stroke:0.3px #222">abc</div></div>
<div class="a" style="left:8px;top:418px;width:25px;height:24px;border:1px solid #b0b0b0;background:linear-gradient(135deg,#fafafa,#d8d8d8)"><svg width="23" height="22"><rect x="1" y="1" width="21" height="20" fill="#f4f4f4"/><path d="M8,1 V21 M15,1 V21 M1,7.5 H22 M1,14.5 H22" stroke="#777" stroke-width="1.5"/></svg></div>
<div class="a" style="left:6px;top:449px;width:29px;height:1px;background:#a8a8a8"></div>
<svg class="a" style="left:8px;top:460px" width="25" height="18" viewBox="0 0 25 18"><ellipse cx="12.5" cy="9" rx="11" ry="7.5" fill="#e0e4e8" stroke="#404040" stroke-width="1.5"/></svg>
<svg class="a" style="left:8px;top:494px" width="25" height="18" viewBox="0 0 25 18"><rect x="2" y="2" width="21" height="14" fill="#eaeaea" stroke="#404040" stroke-width="1.5"/></svg>
<svg class="a" style="left:8px;top:525px" width="25" height="18" viewBox="0 0 25 18"><path d="M12.5,2 L23,16 H2 Z" fill="#f0f0f0" stroke="#404040" stroke-width="1.5"/></svg>
<div class="a hb" style="left:1861px;top:99px"><svg width="19" height="15"><rect x="4.5" y="3.5" width="10" height="7" fill="none" stroke="#6a6a6a" stroke-width="2"/></svg></div>
<div class="a hb" style="left:1889px;top:99px"><svg width="19" height="15"><path d="M5,3 L14,11 M14,3 L5,11" stroke="#6a6a6a" stroke-width="2.2"/></svg></div>
<div class="a hb" style="left:1861px;top:194px"><svg width="19" height="15"><rect x="4.5" y="3.5" width="10" height="7" fill="none" stroke="#6a6a6a" stroke-width="2"/></svg></div>
<div class="a hb" style="left:1889px;top:194px"><svg width="19" height="15"><path d="M5,3 L14,11 M14,3 L5,11" stroke="#6a6a6a" stroke-width="2.2"/></svg></div>
<div class="a hb" style="left:1861px;top:350px"><svg width="19" height="15"><rect x="4.5" y="3.5" width="10" height="7" fill="none" stroke="#6a6a6a" stroke-width="2"/></svg></div>
<div class="a hb" style="left:1889px;top:350px"><svg width="19" height="15"><path d="M5,3 L14,11 M14,3 L5,11" stroke="#6a6a6a" stroke-width="2.2"/></svg></div>
<div class="a hb" style="left:1861px;top:559px"><svg width="19" height="15"><rect x="4.5" y="3.5" width="10" height="7" fill="none" stroke="#6a6a6a" stroke-width="2"/></svg></div>
<div class="a hb" style="left:1889px;top:559px"><svg width="19" height="15"><path d="M5,3 L14,11 M14,3 L5,11" stroke="#6a6a6a" stroke-width="2.2"/></svg></div>
<div class="yl" style="top:149px;color:#f2f2f2">0</div>
<div class="yl" style="top:222px;color:#f2f2f2">1500</div>
<div class="yl" style="top:240px;color:#f2f2f2">1000</div>
<div class="yl" style="top:257.5px;color:#f2f2f2">500</div>
<div class="yl" style="top:275px;color:#f2f2f2">0</div>
<div class="yl" style="top:291.5px;color:#f2f2f2">-500</div>
<div class="yl" style="top:308.5px;color:#f2f2f2">-1000</div>
<div class="yl" style="top:326px;color:#f2f2f2">-1500</div>
<div class="yl" style="top:384.582px;color:#f2f2f2">40</div>
<div class="yl" style="top:406.249px;color:#f2f2f2">30</div>
<div class="yl" style="top:427.916px;color:#f2f2f2">20</div>
<div class="yl" style="top:449.58299999999997px;color:#f2f2f2">10</div>
<div class="yl" style="top:471.25px;color:#f2f2f2">0</div>
<div class="yl" style="top:492.91700000000003px;color:#f2f2f2">-10</div>
<div class="yl" style="top:514.5840000000001px;color:#f2f2f2">-20</div>
<div class="yl" style="top:536.251px;color:#f2f2f2">-30</div>
<div class="yl" style="top:600.8px;color:#f2f2f2">380</div>
<div class="yl" style="top:637.5px;color:#f2f2f2">375</div>
<div class="yl" style="top:674.1999999999999px;color:#f2f2f2">370</div>
<div class="yl" style="top:710.9px;color:#f2f2f2">365</div>
<div class="yl" style="top:784.3px;color:#f2f2f2">355</div>
<div class="yl" style="top:821.0px;color:#f2f2f2">350</div>
<div class="yl" style="top:746px;left:1855px;width:62px;height:12px;overflow:hidden;text-align:right">360</div>
<div class="a top" style="left:1859px;top:756px;width:60px;height:21px;border:1px solid #e8e8e8;background:#000;color:#e00000;font-size:13.5px;line-height:19px;padding-left:2px;letter-spacing:-0.3px">358.3400</div>
<div class="a top" style="left:1856px;top:760px;width:3px;height:1px;background:#fff"></div>
<div class="a" style="left:1855px;top:884px;width:62px;height:41px;background:#eaeaea"></div>
<svg class="a top" style="left:1872px;top:892px" width="24" height="24"><circle cx="12" cy="12" r="9.5" fill="none" stroke="#f02020" stroke-width="1.8"/><circle cx="8.5" cy="9" r="1.4" fill="#f02020"/><circle cx="15.5" cy="9" r="1.4" fill="#f02020"/><path d="M7,17 Q12,12 17,17" fill="none" stroke="#f02020" stroke-width="1.8"/></svg>
<div class="a" style="left:44px;top:925px;width:1876px;height:29px;background:#f0f0f0"></div>
<div class="a" style="left:1437px;top:936px;width:204px;height:7px;background:#8a8a8a"></div>
<div class="a" style="left:1665px;top:929px;width:1px;height:20px;background:#8c8c8c"></div>
<div class="a" style="left:1725px;top:929px;width:1px;height:20px;background:#8c8c8c"></div>
<div class="a" style="left:1838px;top:929px;width:1px;height:20px;background:#8c8c8c"></div>
<svg class="a" style="left:1673px;top:930px" width="20" height="19" viewBox="0 0 20 19"><path d="M3,9 A7,7 0 0 1 15,4 L16,1 L17,8 L10,7 L13,5.5 A5,5 0 0 0 5,9 Z" fill="#444"/><path d="M17,10 A7,7 0 0 1 5,15 L4,18 L3,11 L10,12 L7,13.5 A5,5 0 0 0 15,10 Z" fill="#444"/></svg>
<svg class="a" style="left:1700px;top:930px" width="17" height="19" viewBox="0 0 17 19"><path d="M8.5,5 V15" stroke="#444" stroke-width="2.2"/></svg>
<svg class="a" style="left:1733px;top:929px" width="18" height="21" viewBox="0 0 18 21"><path d="M9,3 V18" stroke="#333" stroke-width="2.2"/><path d="M4,7 L9,1 L14,7 Z M4,14 L9,20 L14,14 Z" fill="#333"/></svg>
<svg class="a" style="left:1759px;top:929px" width="19" height="21" viewBox="0 0 19 21"><path d="M9.5,3 V18 M2,10.5 H17" stroke="#333" stroke-width="2.2"/><path d="M6,5 L9.5,0.5 L13,5 Z M6,16 L9.5,20.5 L13,16 Z M4,7 L-0.5,10.5 L4,14 Z M15,7 L19.5,10.5 L15,14 Z" fill="#333"/></svg>
<svg class="a" style="left:1786px;top:930px" width="18" height="19" viewBox="0 0 18 19"><circle cx="9" cy="9.5" r="7.5" fill="#f0f0f0" stroke="#555" stroke-width="1.5"/><path d="M5,9.5 H13" stroke="#333" stroke-width="2.2"/></svg>
<svg class="a" style="left:1812px;top:930px" width="18" height="19" viewBox="0 0 18 19"><circle cx="9" cy="9.5" r="7.5" fill="#f0f0f0" stroke="#555" stroke-width="1.5"/><path d="M5,9.5 H13 M9,5.5 V13.5" stroke="#333" stroke-width="2.2"/></svg>
<svg class="a" style="left:1846px;top:930px" width="17" height="19" viewBox="0 0 17 19"><path d="M11,4 L5,9.5 L11,15 Z" fill="#c8c8c8"/></svg>
<svg class="a" style="left:1872px;top:930px" width="17" height="19" viewBox="0 0 17 19"><path d="M6,4 L12,9.5 L6,15 Z" fill="#c8c8c8"/></svg>
<svg class="a" style="left:1898px;top:930px" width="18" height="18" viewBox="0 0 18 18"><rect x="1" y="2" width="16" height="14" fill="#fafafa" stroke="#555" stroke-width="1.3"/><path d="M1,6 H17 M4,9 H15 M4,12 H15" stroke="#555" stroke-width="1.2"/></svg>
<div class="a" style="left:0;top:954px;width:1920px;height:42px;background:#e8e8e8;border-top:1px solid #d0d0d0;border-bottom:1px solid #bdbdbd"></div>
<div class="a" style="left:6px;top:960px;width:9px;height:33px;background:linear-gradient(90deg,#c8c8c8,#e0e0e0,#bdbdbd)"><div class="a" style="left:3px;top:14px;width:4px;height:4px;background:#666"></div></div><div class="a" style="left:16px;top:960px;width:1px;height:33px;background:#9a9a9a"></div>
<div class="a" style="left:17px;top:964px;width:160px;height:25px;background:#fff;border:1px solid #a8a8a8;border-radius:2px"><div class="a" style="left:18px;top:11px;width:101px;height:2px;background:#2a2a2a"></div><svg class="a" style="left:143px;top:9px" width="12" height="8"><path d="M1,1 L6,6 L11,1" fill="none" stroke="#555" stroke-width="1.3"/></svg></div>
<div class="a" style="left:181px;top:962px;width:1px;height:28px;background:#8c8c8c"></div>
<div class="a" style="left:187px;top:964px;width:124px;height:25px;background:#fff;border:1px solid #a8a8a8;border-radius:2px"><div class="a" style="left:14px;top:11px;width:76px;height:2px;background:#2a2a2a"></div><svg class="a" style="left:107px;top:9px" width="12" height="8"><path d="M1,1 L6,6 L11,1" fill="none" stroke="#555" stroke-width="1.3"/></svg></div>
<div class="a" style="left:320px;top:958px;width:1px;height:38px;background:#8c8c8c"></div>
<div class="a" style="left:327px;top:960px;width:9px;height:33px;background:linear-gradient(90deg,#c8c8c8,#e0e0e0,#bdbdbd)"><div class="a" style="left:3px;top:14px;width:4px;height:4px;background:#555"></div></div><div class="a" style="left:337px;top:960px;width:1px;height:33px;background:#9a9a9a"></div>
<div class="a" style="left:340px;top:963px;width:13px;height:13px;background:#f8a860;border:1px solid #c8c8c8"></div>
<div class="a" style="left:355px;top:963px;width:13px;height:13px;background:#f8c0c8;border:1px solid #c8c8c8"></div>
<div class="a" style="left:370px;top:963px;width:13px;height:13px;background:#dcdcf4;border:1px solid #c8c8c8"></div>
<div class="a" style="left:385px;top:963px;width:13px;height:13px;background:#f8c800;border:1px solid #c8c8c8"></div>
<div class="a" style="left:400px;top:963px;width:13px;height:13px;background:#f8f800;border:1px solid #c8c8c8"></div>
<div class="a" style="left:415px;top:963px;width:13px;height:13px;background:#606060;border:1px solid #c8c8c8"></div>
<div class="a" style="left:430px;top:963px;width:13px;height:13px;background:#30c030;border:1px solid #c8c8c8"></div>
<div class="a" style="left:445px;top:963px;width:13px;height:13px;background:#f8f8d8;border:1px solid #c8c8c8"></div>
<div class="a" style="left:340px;top:977px;width:13px;height:13px;background:#f86820;border:1px solid #c8c8c8"></div>
<div class="a" style="left:355px;top:977px;width:13px;height:13px;background:#98f098;border:1px solid #c8c8c8"></div>
<div class="a" style="left:370px;top:977px;width:13px;height:13px;background:#800000;border:1px solid #c8c8c8"></div>
<div class="a" style="left:385px;top:977px;width:13px;height:13px;background:#608090;border:1px solid #c8c8c8"></div>
<div class="a" style="left:400px;top:977px;width:13px;height:13px;background:#0000f8;border:1px solid #c8c8c8"></div>
<div class="a" style="left:415px;top:977px;width:13px;height:13px;background:#008000;border:1px solid #c8c8c8"></div>
<div class="a" style="left:430px;top:977px;width:13px;height:13px;background:#f80000;border:1px solid #c8c8c8"></div>
<div class="a" style="left:445px;top:977px;width:13px;height:13px;background:#000000;border:1px solid #c8c8c8"></div>
<svg class="a" style="left:459px;top:973px" width="10" height="7" viewBox="0 0 10 7"><path d="M1,1 H9 L5,6 Z" fill="#222"/></svg>
<div class="a" style="left:481px;top:958px;width:1px;height:38px;background:#8c8c8c"></div>
<div class="a" style="left:488px;top:960px;width:9px;height:33px;background:linear-gradient(90deg,#c8c8c8,#e0e0e0,#bdbdbd)"><div class="a" style="left:3px;top:14px;width:4px;height:4px;background:#555"></div></div><div class="a" style="left:498px;top:960px;width:1px;height:33px;background:#9a9a9a"></div>
<svg class="a" style="left:505px;top:969px" width="20" height="18" viewBox="0 0 20 18"><rect x="1" y="1.5" width="18" height="15" fill="#f8f8f8" stroke="#8aa0b8" stroke-width="1.2"/><path d="M1,3.5 H19" stroke="#c0d0e0"/><path d="M3,14 L7,9 L9,11" stroke="#e02020" stroke-width="1.3" fill="none"/><text x="10" y="15" font-size="11" font-family="Liberation Serif" fill="#222">1</text></svg>
<svg class="a" style="left:539px;top:969px" width="20" height="18" viewBox="0 0 20 18"><rect x="1" y="1.5" width="18" height="15" fill="#f8f8f8" stroke="#8aa0b8" stroke-width="1.2"/><path d="M1,3.5 H19" stroke="#c0d0e0"/><path d="M3,14 L7,9 L9,11" stroke="#e02020" stroke-width="1.3" fill="none"/><text x="10" y="15" font-size="11" font-family="Liberation Serif" fill="#222">2</text></svg>
<svg class="a" style="left:573px;top:969px" width="20" height="18" viewBox="0 0 20 18"><rect x="1" y="1.5" width="18" height="15" fill="#f8f8f8" stroke="#8aa0b8" stroke-width="1.2"/><path d="M1,3.5 H19" stroke="#c0d0e0"/><path d="M3,14 L7,9 L9,11" stroke="#e02020" stroke-width="1.3" fill="none"/><text x="10" y="15" font-size="11" font-family="Liberation Serif" fill="#222">3</text></svg>
<svg class="a" style="left:607px;top:969px" width="20" height="18" viewBox="0 0 20 18"><rect x="1" y="1.5" width="18" height="15" fill="#f8f8f8" stroke="#8aa0b8" stroke-width="1.2"/><path d="M1,3.5 H19" stroke="#c0d0e0"/><path d="M3,14 L7,9 L9,11" stroke="#e02020" stroke-width="1.3" fill="none"/><text x="10" y="15" font-size="11" font-family="Liberation Serif" fill="#222">4</text></svg>
<svg class="a" style="left:641px;top:969px" width="20" height="18" viewBox="0 0 20 18"><rect x="1" y="1.5" width="18" height="15" fill="#f8f8f8" stroke="#8aa0b8" stroke-width="1.2"/><path d="M1,3.5 H19" stroke="#c0d0e0"/><path d="M3,14 L7,9 L9,11" stroke="#e02020" stroke-width="1.3" fill="none"/><text x="10" y="15" font-size="11" font-family="Liberation Serif" fill="#222">5</text></svg>
<svg class="a" style="left:675px;top:969px" width="20" height="18" viewBox="0 0 20 18"><rect x="1" y="1.5" width="18" height="15" fill="#f8f8f8" stroke="#8aa0b8" stroke-width="1.2"/><path d="M1,3.5 H19" stroke="#c0d0e0"/><path d="M3,14 L7,9 L9,11" stroke="#e02020" stroke-width="1.3" fill="none"/><text x="10" y="15" font-size="11" font-family="Liberation Serif" fill="#222">6</text></svg>
<div class="a" style="left:709px;top:958px;width:1px;height:38px;background:#8c8c8c"></div>
<div class="a" style="left:1581px;top:1000.5px;font-size:15.3px;color:#e8e8e8">15/10/2022</div>
<div class="a" style="left:1684px;top:1000.5px;font-size:15.3px;color:#e8e8e8">06:00</div>
<div class="a" style="left:1776px;top:1000.5px;font-size:15.3px;color:#e8e8e8">349.234</div>
<div class="a" style="left:1864px;top:1000px;width:24px;height:19px;background:#f4f4f4"><div style="font:bold 17px 'Liberation Sans',sans-serif;color:#10a030;text-align:center;line-height:19px">$</div></div>
<div class="a" style="left:1893px;top:1000px;width:25px;height:19px;background:#d8d8d8"><svg width="25" height="19"><rect x="4" y="5" width="11" height="8" fill="#4a80c8" stroke="#305080"/><rect x="9" y="2" width="11" height="8" fill="#6aa0e0" stroke="#305080"/><rect x="4" y="14" width="14" height="3" fill="#8a8a8a"/></svg></div>
<svg class="a" style="left:25px;top:1034px" width="34" height="26" viewBox="0 0 34 26"><path d="M9,22 Q1,22 2,16 Q3,11 9,11 Q11,4 18,5 Q25,6 25,12 Q32,12 32,17 Q32,22 26,22 Z" fill="#bcd6f4"/><path d="M9,22 Q1,22 2,16 Q18,20 32,17 Q32,22 26,22 Z" fill="#8ab4e8"/></svg>
<div class="a" style="left:65px;top:1031px;font-size:15px;color:#fff">20°C</div>
<div class="a" style="left:65px;top:1051px;font-size:15px;color:#fff">Nublado</div>
<svg class="a" style="left:506px;top:1036px" width="30" height="30" viewBox="0 0 30 30"><defs><linearGradient id="wg" x1="0" y1="0" x2="1" y2="1"><stop offset="0" stop-color="#60d8fa"/><stop offset="1" stop-color="#1a9ef0"/></linearGradient></defs><rect x="0" y="0" width="14" height="14" rx="1.5" fill="url(#wg)"/><rect x="16" y="0" width="14" height="14" rx="1.5" fill="url(#wg)"/><rect x="0" y="16" width="14" height="14" rx="1.5" fill="url(#wg)"/><rect x="16" y="16" width="14" height="14" rx="1.5" fill="url(#wg)"/></svg>
<svg class="a" style="left:562px;top:1036px" width="29" height="30" viewBox="0 0 29 30"><circle cx="16" cy="12" r="9.5" fill="#3a3a42" stroke="#f0f0f0" stroke-width="3"/><path d="M9,19 L2,27" stroke="#f0f0f0" stroke-width="3.5" stroke-linecap="round"/></svg>
<svg class="a" style="left:616px;top:1036px" width="30" height="30" viewBox="0 0 30 30"><circle cx="15" cy="14" r="13.5" fill="#7a6ee8"/><path d="M3,22 L1,29 L9,26 Z" fill="#6a5ed8"/><rect x="7" y="9" width="12" height="11" rx="2" fill="#fff"/><path d="M19,13 L24,10 V19 L19,16 Z" fill="#fff"/></svg>
<svg class="a" style="left:672px;top:1035px" width="29" height="30" viewBox="0 0 29 30"><rect x="8" y="1" width="20" height="27" rx="2" fill="#fff"/><path d="M17,7 H26 M17,11 H26 M17,15 H26 M17,19 H26" stroke="#2b579a" stroke-width="2"/><rect x="0" y="5" width="19" height="20" rx="2" fill="#2b579a"/><text x="2.5" y="20" font-family="Liberation Sans" font-weight="bold" font-size="13" fill="#fff">W</text></svg>
<div class="a" style="left:682px;top:1071px;width:9px;height:3px;border-radius:2px;background:#9a9aa0"></div>
<svg class="a" style="left:726px;top:1035px" width="30" height="30" viewBox="0 0 30 30"><defs><linearGradient id="mg" x1="0" y1="0" x2="0" y2="1"><stop offset="0" stop-color="#4a4a4a"/><stop offset="1" stop-color="#000"/></linearGradient></defs><rect x="0" y="0" width="30" height="30" rx="3" fill="url(#mg)"/><path d="M7,27 L9,19 H13 L11,27 Z M13,27 L16,12 H20 L17,27 Z M19,27 L23,3 H27 L23,27 Z" fill="#f08020"/></svg>
<svg class="a" style="left:780px;top:1036px" width="32" height="29" viewBox="0 0 32 29"><path d="M1,3 H12 L14,6 H31 V27 H1 Z" fill="#e8b830"/><rect x="1" y="8" width="30" height="20" rx="1" fill="#f8d050"/><rect x="9" y="20" width="15" height="5" rx="1" fill="#1a78d8"/></svg>
<svg class="a" style="left:836px;top:1030px" width="36" height="36" viewBox="0 0 36 36"><circle cx="15" cy="21" r="13.5" fill="#db4437"/><path d="M15,21 L3.3,14.3 A13.5,13.5 0 0 0 15,34.5 Z" fill="#0f9d58"/><path d="M15,21 L15,34.5 A13.5,13.5 0 0 0 26.7,14.3 Z" fill="#f4b400"/><circle cx="15" cy="21" r="6" fill="#fff"/><circle cx="15" cy="21" r="4.6" fill="#4285f4"/><circle cx="26" cy="9" r="8" fill="#e86a10"/><text x="22" y="14" font-family="Liberation Sans" font-weight="bold" font-size="10" fill="#fff">N</text></svg>
<div class="a" style="left:846px;top:1071px;width:9px;height:3px;border-radius:2px;background:#9a9aa0"></div>
<svg class="a" style="left:892px;top:1035px" width="29" height="30" viewBox="0 0 29 30"><rect x="8" y="2" width="20" height="26" rx="2" fill="#fff"/><path d="M16,10 A5,5 0 1 1 21,15 H16 Z" fill="#d04423" opacity="0.8"/><path d="M17,20 H26 M17,23 H26" stroke="#d04423" stroke-width="2"/><rect x="0" y="5" width="19" height="20" rx="2" fill="#c43e1c"/><text x="4" y="20" font-family="Liberation Sans" font-weight="bold" font-size="14" fill="#fff">P</text></svg>
<svg class="a" style="left:946px;top:1034px" width="30" height="30" viewBox="0 0 30 30"><path d="M11,2 H19 L24,24 H6 Z" fill="#f08a10"/><path d="M9,12 H21 L22,17 H8 Z" fill="#f4f4f4"/><path d="M12,4 H18 L19,8 H11 Z" fill="#f4f4f4"/><rect x="2" y="24" width="26" height="5" rx="1" fill="#f08a10"/></svg>
<svg class="a" style="left:1001px;top:1035px" width="30" height="30" viewBox="0 0 30 30"><defs><linearGradient id="eg" x1="0" y1="0" x2="1" y2="1"><stop offset="0" stop-color="#34c1f0"/><stop offset="0.6" stop-color="#1a70d0"/><stop offset="1" stop-color="#52d66a"/></linearGradient></defs><circle cx="15" cy="15" r="14.5" fill="url(#eg)"/><path d="M8,17 Q9,9 16,9 Q23,9 23,15 H11 Q11,22 19,22 Q24,22 27,20 Q24,28 15,28 Q7,27 8,17 Z" fill="#1a3a8a" opacity="0.55"/></svg>
<svg class="a" style="left:1056px;top:1035px" width="29" height="30" viewBox="0 0 29 30"><rect x="9" y="2" width="19" height="26" rx="2" fill="#fff"/><path d="M18,8 H25 V16 H18 Z" fill="none" stroke="#3955a3" stroke-width="1.8"/><rect x="0" y="5" width="19" height="20" rx="2" fill="#3955a3"/><text x="4" y="20" font-family="Liberation Sans" font-weight="bold" font-size="14" fill="#fff">V</text></svg>
<svg class="a" style="left:1111px;top:1035px" width="29" height="30" viewBox="0 0 29 30"><rect x="9" y="2" width="19" height="26" rx="2" fill="#fff"/><path d="M17,7 H26 M17,11 H26 M17,15 H26 M17,19 H26 M21,5 V23" stroke="#1d6f42" stroke-width="1.6"/><rect x="0" y="5" width="19" height="20" rx="2" fill="#1d6f42"/><text x="4" y="20" font-family="Liberation Sans" font-weight="bold" font-size="14" fill="#fff">X</text></svg>
<div class="a" style="left:1121px;top:1071px;width:9px;height:3px;border-radius:2px;background:#9a9aa0"></div>
<svg class="a" style="left:1165px;top:1035px" width="30" height="30" viewBox="0 0 30 30"><circle cx="15" cy="15" r="14.5" fill="#db4437"/><path d="M15,15 L2.4,7.7 A14.5,14.5 0 0 0 15,29.5 Z" fill="#0f9d58"/><path d="M15,15 L15,29.5 A14.5,14.5 0 0 0 27.6,7.7 Z" fill="#f4b400"/><circle cx="15" cy="15" r="6.5" fill="#fff"/><circle cx="15" cy="15" r="5" fill="#4285f4"/></svg>
<svg class="a" style="left:1222px;top:1035px" width="26" height="30" viewBox="0 0 26 30"><rect x="1" y="0" width="24" height="30" rx="3" fill="#7a8a9a"/><rect x="4" y="3" width="18" height="6" fill="#38b0e8"/><g fill="#e8eef4"><rect x="4" y="12" width="4" height="4"/><rect x="11" y="12" width="4" height="4"/><rect x="18" y="12" width="4" height="4"/><rect x="4" y="18" width="4" height="4"/><rect x="11" y="18" width="4" height="4"/><rect x="18" y="18" width="4" height="4"/><rect x="4" y="24" width="4" height="4"/><rect x="11" y="24" width="4" height="4"/><rect x="18" y="24" width="4" height="4"/></g></svg>
<svg class="a" style="left:1275px;top:1035px" width="30" height="30" viewBox="0 0 30 30"><rect x="0" y="2" width="30" height="28" fill="#1a8a8a"/><path d="M8,28 Q5,20 9,17 Q7,12 12,11 Q15,10 18,11 Q23,12 21,17 Q25,20 22,28 Z" fill="#f4f4f4" stroke="#222" stroke-width="1"/><path d="M15,2 V9 M12,5 H18" stroke="#222" stroke-width="2"/></svg>
<div class="a" style="left:1323px;top:1027px;width:44px;height:49px;border-radius:5px;background:#2e2b35"></div>
<svg class="a" style="left:1330px;top:1035px" width="30" height="30" viewBox="0 0 30 30"><defs><linearGradient id="mg2" x1="0" y1="0" x2="0" y2="1"><stop offset="0" stop-color="#4a4a4a"/><stop offset="1" stop-color="#000"/></linearGradient></defs><rect x="0" y="0" width="30" height="30" rx="3" fill="url(#mg2)"/><path d="M7,27 L9,19 H13 L11,27 Z M13,27 L16,12 H20 L17,27 Z M19,27 L23,3 H27 L23,27 Z" fill="#f08020"/></svg>
<div class="a" style="left:1335px;top:1071px;width:20px;height:3px;border-radius:2px;background:#5ac8f8"></div>
<svg class="a" style="left:1386px;top:1035px" width="30" height="30" viewBox="0 0 30 30"><rect x="1" y="1" width="28" height="28" rx="3" fill="none" stroke="#c02030" stroke-width="1.5"/><text x="3" y="23" font-family="Liberation Sans" font-size="15" fill="#c02030">Pro</text><path d="M20,6 H26 M4,8 H7" stroke="#c02030" stroke-width="1.5"/></svg>
<div class="a" style="left:1396px;top:1071px;width:9px;height:3px;border-radius:2px;background:#9a9aa0"></div>
<svg class="a" style="left:1631px;top:1042px" width="18" height="12" viewBox="0 0 18 12"><path d="M1,10 L9,2 L17,10" fill="none" stroke="#fff" stroke-width="1.5"/></svg>
<svg class="a" style="left:1658px;top:1040px" width="24" height="22" viewBox="0 0 24 22"><path d="M3,15 Q0,15 1,11 Q2,7 6,7 Q8,2 13,3 Q18,4 18,9 Q21,9 21,13 Q21,15 18,15 Z" fill="#c8c8c8"/><circle cx="15" cy="15" r="5.5" fill="#e02030"/><path d="M13,13 L17,17 M17,13 L13,17" stroke="#fff" stroke-width="1.4"/></svg>
<svg class="a" style="left:1693px;top:1038px" width="24" height="20" viewBox="0 0 24 20"><path d="M2,8 Q12,-1 22,8" fill="none" stroke="#fff" stroke-width="2"/><path d="M5.5,11.5 Q12,5 18.5,11.5" fill="none" stroke="#fff" stroke-width="2"/><path d="M9,15 Q12,12 15,15" fill="none" stroke="#fff" stroke-width="2"/><circle cx="12" cy="18" r="1.6" fill="#fff"/></svg>
<svg class="a" style="left:1724px;top:1039px" width="24" height="20" viewBox="0 0 24 20"><path d="M2,7 H6 L11,2 V18 L6,13 H2 Z" fill="none" stroke="#fff" stroke-width="1.5"/><path d="M14,6 Q17,10 14,14 M17,3 Q22,10 17,17" fill="none" stroke="#fff" stroke-width="1.5"/></svg>
<svg class="a" style="left:1753px;top:1039px" width="24" height="20" viewBox="0 0 24 20"><rect x="6" y="5" width="14" height="10" rx="2" fill="none" stroke="#fff" stroke-width="1.5"/><rect x="20" y="8" width="2" height="4" fill="#fff"/><rect x="8" y="7" width="4" height="6" fill="#fff"/><path d="M1,4 H6 M3,2 V6" stroke="#fff" stroke-width="1.3"/></svg>
<div class="a" style="left:1829px;top:1031px;font-size:15px;color:#fff">20:43</div>
<div class="a" style="left:1793px;top:1051px;font-size:15px;color:#fff">14/10/2022</div>
<div class="a" style="left:1875px;top:1040px;width:21px;height:21px;border-radius:50%;background:#4cc2ff;color:#111;font-size:14px;text-align:center;line-height:21px">2</div>
<div class="a top" style="left:86px;top:906px;font-size:15px;color:#fff;padding-left:2px">October</div>
<div class="a" style="left:44px;top:924px;width:1811px;height:1.5px;background:#3a3a3a;z-index:3"></div>

</body></html>
